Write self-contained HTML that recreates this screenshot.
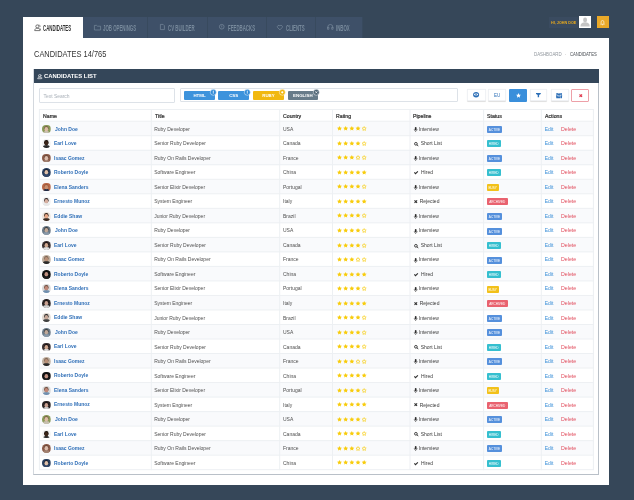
<!DOCTYPE html><html><head><meta charset="utf-8"><style>
*{margin:0;padding:0;box-sizing:border-box}
html,body{width:634px;height:500px;overflow:hidden}
body{background:#364759;font-family:"Liberation Sans",sans-serif;position:relative}
.t{position:absolute;white-space:nowrap;line-height:1}
.n{}
.b{position:absolute}
svg{position:absolute;overflow:visible}
#L{position:absolute;left:0;top:0;width:634px;height:500px;will-change:transform}</style></head><body><div id="L">
<div class="b" style="left:23.00px;top:16.80px;width:60.00px;height:20.80px;background:#fff"></div>
<div class="t" style="left:43.00px;top:23.94px;font-size:8.7px;color:#333;font-weight:bold;transform:scaleX(0.5);transform-origin:0 0;">CANDIDATES</div>
<div class="b" style="left:83.00px;top:16.50px;width:65.00px;height:21.10px;background:#3e5068;border-right:1px solid #384a5e"></div>
<div class="t" style="left:103.00px;top:23.94px;font-size:8.7px;color:#788a9c;font-weight:bold;transform:scaleX(0.5);transform-origin:0 0;">JOB OPENINGS</div>
<div class="b" style="left:148.00px;top:16.50px;width:59.50px;height:21.10px;background:#3e5068;border-right:1px solid #384a5e"></div>
<div class="t" style="left:168.10px;top:23.94px;font-size:8.7px;color:#788a9c;font-weight:bold;transform:scaleX(0.5);transform-origin:0 0;">CV BUILDER</div>
<div class="b" style="left:207.50px;top:16.50px;width:59.50px;height:21.10px;background:#3e5068;border-right:1px solid #384a5e"></div>
<div class="t" style="left:227.50px;top:23.94px;font-size:8.7px;color:#788a9c;font-weight:bold;transform:scaleX(0.5);transform-origin:0 0;">FEEDBACKS</div>
<div class="b" style="left:267.00px;top:16.50px;width:49.00px;height:21.10px;background:#3e5068;border-right:1px solid #384a5e"></div>
<div class="t" style="left:285.90px;top:23.94px;font-size:8.7px;color:#788a9c;font-weight:bold;transform:scaleX(0.5);transform-origin:0 0;">CLIENTS</div>
<div class="b" style="left:316.00px;top:16.50px;width:46.50px;height:21.10px;background:#3e5068;border-right:1px solid #384a5e"></div>
<div class="t" style="left:336.00px;top:23.94px;font-size:8.7px;color:#788a9c;font-weight:bold;transform:scaleX(0.5);transform-origin:0 0;">INBOX</div>
<svg style="left:33.6px;top:23.8px" width="7" height="7" viewBox="0 0 7 7"><circle cx="3.3" cy="2.4" r="1.5" stroke="#555" stroke-width="0.8" fill="none"/><path d="M0.7 6.6C0.7 5 1.8 4.3 3.3 4.3S5.9 5 5.9 6.6Z" stroke="#555" stroke-width="0.8" fill="none"/><path d="M4.6 0.8a1.4 1.4 0 0 1 1 2.4M5.6 4.2c0.6 0.3 1 1 1 2.2" stroke="#555" stroke-width="0.7" fill="none"/></svg>
<svg style="left:93.9px;top:24.6px" width="7" height="5.4" viewBox="0 0 7 5.4"><path d="M0.4 0.4h2.3l0.8 0.8h3.1v3.8H0.4z" stroke="#788a9c" stroke-width="0.7" fill="none"/></svg>
<svg style="left:159.8px;top:24.2px" width="4.8" height="6" viewBox="0 0 4.8 6"><path d="M0.4 0.4h2.7l1.3 1.3v3.9H0.4z" stroke="#788a9c" stroke-width="0.7" fill="none"/></svg>
<svg style="left:218.8px;top:24.3px" width="5.5" height="5.5" viewBox="0 0 5.5 5.5"><circle cx="2.75" cy="2.75" r="2.35" stroke="#788a9c" stroke-width="0.7" fill="none"/><path d="M2.75 1.4v1.9M2.75 3.8v0.5" stroke="#788a9c" stroke-width="0.7"/></svg>
<svg style="left:277.3px;top:24.5px" width="5.8" height="5.2" viewBox="0 0 5.8 5.2"><path d="M2.9 4.9L0.7 2.6A1.3 1.3 0 0 1 2.9 0.9A1.3 1.3 0 0 1 5.1 2.6z" stroke="#788a9c" stroke-width="0.7" fill="none"/></svg>
<svg style="left:326.9px;top:24.3px" width="6.6" height="5.6" viewBox="0 0 6.6 5.6"><path d="M0.8 4V3a2.5 2.5 0 0 1 5 0v1M0.5 3.3h1.4v2h-1.4zM4.7 3.3h1.4v2h-1.4z" stroke="#788a9c" stroke-width="0.7" fill="none"/></svg>
<div class="b" style="left:548.70px;top:17.00px;width:29.80px;height:10.80px;background:#3a4b60"></div>
<div class="t" style="left:551.00px;top:20.66px;font-size:4.3px;color:#e9aa1c;font-weight:bold;transform:scaleX(0.87);transform-origin:0 0;">HI, JOHN DOE</div>
<div class="b" style="left:579.10px;top:16.40px;width:12.20px;height:11.90px;background:#fff"></div>
<svg style="left:579.1px;top:16.4px" width="12.2" height="11.9" viewBox="0 0 12.2 11.9"><ellipse cx="6.1" cy="3.9" rx="2.0" ry="2.3" fill="#c4c4c4"/><path d="M1.4 10.6C1.4 7.6 3.4 6.3 6.1 6.3S10.8 7.6 10.8 10.6Z" fill="#c4c4c4"/></svg>
<div class="b" style="left:597.00px;top:16.40px;width:11.80px;height:11.90px;background:#eaa929"></div>
<svg style="left:600.4px;top:19.9px" width="5" height="5.3" viewBox="0 0 9 10"><path d="M4.5 1a2.6 2.6 0 0 1 2.6 2.6V6.5L8.2 8H0.8L1.9 6.5V3.6A2.6 2.6 0 0 1 4.5 1zM3.5 9h2" stroke="#fff" stroke-width="1.1" fill="none"/></svg>
<div class="b" style="left:23.00px;top:37.50px;width:586.20px;height:447.00px;background:#fff"></div>
<div class="t" style="left:33.80px;top:49.89px;font-size:8.4px;color:#333;font-weight:normal;transform:scaleX(0.89);transform-origin:0 0;">CANDIDATES 14/765</div>
<div class="t" style="left:533.90px;top:51.50px;font-size:5.2px;color:#8f959c;font-weight:normal;transform:scaleX(0.84);transform-origin:0 0;">DASHBOARD</div>
<div class="t n" style="left:564.80px;top:51.50px;font-size:5.2px;color:#999;font-weight:normal;">·</div>
<div class="t" style="left:569.90px;top:51.50px;font-size:5.2px;color:#454a50;font-weight:normal;transform:scaleX(0.81);transform-origin:0 0;">CANDIDATES</div>
<div class="b" style="left:33.00px;top:69.00px;width:566.20px;height:405.60px;background:#fff;border:1px solid #d3d8de;border-right-color:#b9c0c8;border-bottom-color:#b9c0c8;border-top:none"></div>
<div class="b" style="left:34.00px;top:69.00px;width:565.20px;height:13.80px;background:#344659"></div>
<svg style="left:37px;top:74px" width="5.4" height="5" viewBox="0 0 7 7"><circle cx="3.3" cy="2.4" r="1.5" stroke="#fff" stroke-width="0.9" fill="none"/><path d="M0.7 6.6C0.7 5 1.8 4.3 3.3 4.3S5.9 5 5.9 6.6Z" stroke="#fff" stroke-width="0.9" fill="none"/><path d="M4.6 0.8a1.4 1.4 0 0 1 1 2.4M5.6 4.2c0.6 0.3 1 1 1 2.2" stroke="#fff" stroke-width="0.8" fill="none"/></svg>
<div class="t" style="left:44.00px;top:73.91px;font-size:5.9px;color:#fff;font-weight:bold;">CANDIDATES LIST</div>
<div class="b" style="left:39.00px;top:88.20px;width:136.30px;height:14.70px;border:1px solid #dde2e8;border-radius:1px;background:#fff"></div>
<div class="t n" style="left:43.50px;top:95.11px;font-size:4.95px;color:#a9b0b8;font-weight:normal;">Text Search</div>
<div class="b" style="left:180.00px;top:87.60px;width:277.60px;height:14.70px;border:1px solid #dde2e8;border-radius:1px;background:#fff"></div>
<div class="b" style="left:184.10px;top:91.30px;width:30.80px;height:8.50px;background:#3d93dc;border-radius:1px"></div>
<div class="t" style="left:184.10px;top:93.80px;width:30.80px;text-align:center;font-size:4.4px;line-height:4.4px;color:#fff;font-weight:bold">HTML</div>
<svg style="left:210.10px;top:88.90px" width="6.6" height="6.6" viewBox="0 0 6.6 6.6"><circle cx="3.3" cy="3.3" r="3.0" fill="#2f8ad8" stroke="#fff" stroke-width="0.5"/><path d="M3.3 1.6v2.3M3.3 4.4v0.6" stroke="#fff" stroke-width="0.8"/></svg>
<div class="b" style="left:218.40px;top:91.30px;width:30.60px;height:8.50px;background:#3d93dc;border-radius:1px"></div>
<div class="t" style="left:218.40px;top:93.80px;width:30.60px;text-align:center;font-size:4.4px;line-height:4.4px;color:#fff;font-weight:bold">CSS</div>
<svg style="left:244.20px;top:88.90px" width="6.6" height="6.6" viewBox="0 0 6.6 6.6"><circle cx="3.3" cy="3.3" r="3.0" fill="#2f8ad8" stroke="#fff" stroke-width="0.5"/><path d="M3.3 1.6v2.3M3.3 4.4v0.6" stroke="#fff" stroke-width="0.8"/></svg>
<div class="b" style="left:253.00px;top:91.30px;width:31.00px;height:8.50px;background:#f1b810;border-radius:1px"></div>
<div class="t" style="left:253.00px;top:93.80px;width:31.00px;text-align:center;font-size:4.4px;line-height:4.4px;color:#fff;font-weight:bold">RUBY</div>
<svg style="left:279.20px;top:88.90px" width="6.6" height="6.6" viewBox="0 0 6.6 6.6"><circle cx="3.3" cy="3.3" r="3.0" fill="#f1b810" stroke="#fff" stroke-width="0.5"/><circle cx="3.3" cy="3.3" r="1.1" fill="#fff"/></svg>
<div class="b" style="left:287.60px;top:91.30px;width:30.40px;height:8.50px;background:#677b89;border-radius:1px"></div>
<div class="t" style="left:287.60px;top:93.80px;width:30.40px;text-align:center;font-size:4.4px;line-height:4.4px;color:#fff;font-weight:bold">ENGLISH</div>
<svg style="left:313.20px;top:88.90px" width="6.6" height="6.6" viewBox="0 0 6.6 6.6"><circle cx="3.3" cy="3.3" r="3.0" fill="#4f6575" stroke="#fff" stroke-width="0.5"/><path d="M2.3 2.3l2 2M4.3 2.3l-2 2" stroke="#fff" stroke-width="0.7"/></svg>
<div class="b" style="left:466.80px;top:88.50px;width:18.80px;height:12.80px;background:#fff;border:1px solid #f0f2f5;border-radius:1px;box-shadow:0 0.8px 0.8px rgba(0,0,0,0.13)"></div>
<div class="b" style="left:488.30px;top:88.50px;width:17.90px;height:12.80px;background:#fff;border:1px solid #f0f2f5;border-radius:1px;box-shadow:0 0.8px 0.8px rgba(0,0,0,0.13)"></div>
<div class="b" style="left:509.00px;top:88.50px;width:17.90px;height:13.00px;background:#3a8fdb;border-radius:1px"></div>
<div class="b" style="left:529.70px;top:88.50px;width:17.60px;height:12.80px;background:#fff;border:1px solid #f0f2f5;border-radius:1px;box-shadow:0 0.8px 0.8px rgba(0,0,0,0.13)"></div>
<div class="b" style="left:550.70px;top:88.50px;width:18.20px;height:12.80px;background:#fff;border:1px solid #f0f2f5;border-radius:1px;box-shadow:0 0.8px 0.8px rgba(0,0,0,0.13)"></div>
<div class="b" style="left:571.20px;top:88.50px;width:17.60px;height:13.00px;background:#fff;border:1px solid #eda0a8;border-radius:1px"></div>
<svg style="left:473px;top:92.3px" width="6.2" height="5.6" viewBox="0 0 6.2 5.6"><ellipse cx="3.1" cy="2.8" rx="3.0" ry="2.75" fill="#2d6fb7"/><ellipse cx="3.1" cy="2.5" rx="2.1" ry="1.0" fill="#fff"/><circle cx="3.1" cy="2.4" r="0.75" fill="#2d6fb7"/></svg>
<div class="t n" style="left:493.90px;top:93.17px;font-size:5.0px;color:#2d6fb7;font-weight:normal;transform:scaleX(0.9);transform-origin:0 0;">EU</div>
<svg style="left:515.6px;top:92.9px" width="5" height="4.8" viewBox="0 0 10 9.6"><path d="M5 0.2l1.5 3.1 3.4 0.4-2.5 2.3 0.7 3.4L5 7.7 1.9 9.4l0.7-3.4L0.1 3.7l3.4-0.4z" fill="#fff"/></svg>
<svg style="left:536.2px;top:93px" width="4.8" height="4.2" viewBox="0 0 4.8 4.2"><path d="M0 0h4.8v0.9L3.1 2.1v2.1H1.7V2.1L0 0.9z" fill="#2d6fb7"/></svg>
<svg style="left:556.4px;top:92.6px" width="6.2" height="5.2" viewBox="0 0 6.2 5.2"><circle cx="1.1" cy="1.1" r="1.0" fill="#2d6fb7"/><circle cx="5.1" cy="1.1" r="1.0" fill="#2d6fb7"/><circle cx="3.1" cy="1.6" r="1.25" fill="#2d6fb7"/><path d="M0 2.2h1.6l0.3 3H0.3zM6.2 2.2H4.6l-0.3 3h1.6zM1.5 2.9h3.2v2.3H1.5z" fill="#2d6fb7"/><path d="M1.6 3.4h3" stroke="#fff" stroke-width="0.35"/></svg>
<svg style="left:578.6px;top:93.8px" width="3.6" height="3.4" viewBox="0 0 3.6 3.4"><path d="M0.5 0.5l2.6 2.4M3.1 0.5l-2.6 2.4" stroke="#e0354b" stroke-width="1.2"/></svg>
<svg style="left:0;top:0" width="634" height="500" viewBox="0 0 634 500"><rect x="39.4" y="121.20" width="554.00" height="14.52" fill="#f9fafc"/><rect x="39.4" y="150.24" width="554.00" height="14.52" fill="#f9fafc"/><rect x="39.4" y="179.28" width="554.00" height="14.52" fill="#f9fafc"/><rect x="39.4" y="208.32" width="554.00" height="14.52" fill="#f9fafc"/><rect x="39.4" y="237.36" width="554.00" height="14.52" fill="#f9fafc"/><rect x="39.4" y="266.40" width="554.00" height="14.52" fill="#f9fafc"/><rect x="39.4" y="295.44" width="554.00" height="14.52" fill="#f9fafc"/><rect x="39.4" y="324.48" width="554.00" height="14.52" fill="#f9fafc"/><rect x="39.4" y="353.52" width="554.00" height="14.52" fill="#f9fafc"/><rect x="39.4" y="382.56" width="554.00" height="14.52" fill="#f9fafc"/><rect x="39.4" y="411.60" width="554.00" height="14.52" fill="#f9fafc"/><rect x="39.4" y="440.64" width="554.00" height="14.52" fill="#f9fafc"/><rect x="39.4" y="109.00" width="554.00" height="1" fill="#edf0f3"/><rect x="39.4" y="120.70" width="554.00" height="1" fill="#edf0f3"/><rect x="39.4" y="135.22" width="554.00" height="1" fill="#edf0f3"/><rect x="39.4" y="149.74" width="554.00" height="1" fill="#edf0f3"/><rect x="39.4" y="164.26" width="554.00" height="1" fill="#edf0f3"/><rect x="39.4" y="178.78" width="554.00" height="1" fill="#edf0f3"/><rect x="39.4" y="193.30" width="554.00" height="1" fill="#edf0f3"/><rect x="39.4" y="207.82" width="554.00" height="1" fill="#edf0f3"/><rect x="39.4" y="222.34" width="554.00" height="1" fill="#edf0f3"/><rect x="39.4" y="236.86" width="554.00" height="1" fill="#edf0f3"/><rect x="39.4" y="251.38" width="554.00" height="1" fill="#edf0f3"/><rect x="39.4" y="265.90" width="554.00" height="1" fill="#edf0f3"/><rect x="39.4" y="280.42" width="554.00" height="1" fill="#edf0f3"/><rect x="39.4" y="294.94" width="554.00" height="1" fill="#edf0f3"/><rect x="39.4" y="309.46" width="554.00" height="1" fill="#edf0f3"/><rect x="39.4" y="323.98" width="554.00" height="1" fill="#edf0f3"/><rect x="39.4" y="338.50" width="554.00" height="1" fill="#edf0f3"/><rect x="39.4" y="353.02" width="554.00" height="1" fill="#edf0f3"/><rect x="39.4" y="367.54" width="554.00" height="1" fill="#edf0f3"/><rect x="39.4" y="382.06" width="554.00" height="1" fill="#edf0f3"/><rect x="39.4" y="396.58" width="554.00" height="1" fill="#edf0f3"/><rect x="39.4" y="411.10" width="554.00" height="1" fill="#edf0f3"/><rect x="39.4" y="425.62" width="554.00" height="1" fill="#edf0f3"/><rect x="39.4" y="440.14" width="554.00" height="1" fill="#edf0f3"/><rect x="39.4" y="454.66" width="554.00" height="1" fill="#edf0f3"/><rect x="39.4" y="469.18" width="554.00" height="1" fill="#edf0f3"/><rect x="38.90" y="109.00" width="1" height="361.18" fill="#edf0f3"/><rect x="150.80" y="109.00" width="1" height="361.18" fill="#edf0f3"/><rect x="279.20" y="109.00" width="1" height="361.18" fill="#edf0f3"/><rect x="332.00" y="109.00" width="1" height="361.18" fill="#edf0f3"/><rect x="409.50" y="109.00" width="1" height="361.18" fill="#edf0f3"/><rect x="483.10" y="109.00" width="1" height="361.18" fill="#edf0f3"/><rect x="540.80" y="109.00" width="1" height="361.18" fill="#edf0f3"/><rect x="592.90" y="109.00" width="1" height="361.18" fill="#edf0f3"/></svg>
<div class="t n" style="left:42.70px;top:113.57px;font-size:5.0px;color:#333;font-weight:normal;transform:scaleX(1.04);transform-origin:0 0;-webkit-text-stroke:0.22px #333;">Name</div>
<div class="t n" style="left:154.60px;top:113.57px;font-size:5.0px;color:#333;font-weight:normal;transform:scaleX(1.04);transform-origin:0 0;-webkit-text-stroke:0.22px #333;">Title</div>
<div class="t n" style="left:283.00px;top:113.57px;font-size:5.0px;color:#333;font-weight:normal;transform:scaleX(1.04);transform-origin:0 0;-webkit-text-stroke:0.22px #333;">Country</div>
<div class="t n" style="left:335.80px;top:113.57px;font-size:5.0px;color:#333;font-weight:normal;transform:scaleX(1.04);transform-origin:0 0;-webkit-text-stroke:0.22px #333;">Rating</div>
<div class="t n" style="left:413.30px;top:113.57px;font-size:5.0px;color:#333;font-weight:normal;transform:scaleX(1.04);transform-origin:0 0;-webkit-text-stroke:0.22px #333;">Pipeline</div>
<div class="t n" style="left:486.90px;top:113.57px;font-size:5.0px;color:#333;font-weight:normal;transform:scaleX(1.04);transform-origin:0 0;-webkit-text-stroke:0.22px #333;">Status</div>
<div class="t n" style="left:544.60px;top:113.57px;font-size:5.0px;color:#333;font-weight:normal;transform:scaleX(1.04);transform-origin:0 0;-webkit-text-stroke:0.22px #333;">Actions</div>
<div class="b" style="left:42.3px;top:124.71px;width:8.7px;height:8.7px;border-radius:50%;overflow:hidden"><svg style="left:0;top:0" width="8.7" height="8.7" viewBox="0 0 10 10"><rect width="10" height="10" fill="#8a9a58"/><path d="M0.8 10.5C0.8 7.6 2.8 6.9 5 6.9S9.2 7.6 9.2 10.5Z" fill="#c8c0b0"/><ellipse cx="5" cy="3.9" rx="2.6" ry="2.8" fill="#7a6048"/><ellipse cx="5" cy="4.8" rx="2.1" ry="2.5" fill="#dcbca4"/></svg></div>
<div class="t" style="left:54.80px;top:126.60px;font-size:5.2px;color:#3170b8;font-weight:bold;transform:scaleX(0.965);transform-origin:0 0;">John Doe</div>
<div class="t n" style="left:154.20px;top:126.77px;font-size:5.0px;color:#505050;font-weight:normal;">Ruby Developer</div>
<div class="t n" style="left:283.00px;top:126.77px;font-size:5.0px;color:#505050;font-weight:normal;">USA</div>
<svg style="left:336.5px;top:126.36px" width="30" height="5" viewBox="0 0 30 5"><path transform="translate(0.00,0)" d="M2.5 0l0.74 1.55 1.7 0.2-1.25 1.17 0.33 1.7-1.52-0.84-1.52 0.84 0.33-1.7L0.06 1.75l1.7-0.2z" fill="#f8cc0c"/><path transform="translate(6.17,0)" d="M2.5 0l0.74 1.55 1.7 0.2-1.25 1.17 0.33 1.7-1.52-0.84-1.52 0.84 0.33-1.7L0.06 1.75l1.7-0.2z" fill="#f8cc0c"/><path transform="translate(12.34,0)" d="M2.5 0l0.74 1.55 1.7 0.2-1.25 1.17 0.33 1.7-1.52-0.84-1.52 0.84 0.33-1.7L0.06 1.75l1.7-0.2z" fill="#f8cc0c"/><path transform="translate(18.51,0)" d="M2.5 0l0.74 1.55 1.7 0.2-1.25 1.17 0.33 1.7-1.52-0.84-1.52 0.84 0.33-1.7L0.06 1.75l1.7-0.2z" fill="#f8cc0c"/><path transform="translate(24.68,0)" d="M2.5 0.55l0.6 1.3 1.42 0.17-1.05 0.98 0.28 1.42-1.25-0.7-1.25 0.7 0.28-1.42-1.05-0.98 1.42-0.17z" fill="none" stroke="#f8cc0c" stroke-width="0.65"/></svg>
<svg style="left:414.1px;top:126.96px" width="3.4" height="4.8" viewBox="0 0 3.4 4.8"><rect x="0.85" y="0" width="1.7" height="3.0" rx="0.85" fill="#2e2e2e"/><path d="M0.35 2.0v0.6a1.35 1.35 0 0 0 2.7 0V2.0" stroke="#2e2e2e" stroke-width="0.55" fill="none"/><rect x="1.45" y="3.9" width="0.5" height="0.9" fill="#2e2e2e"/></svg>
<div class="t n" style="left:418.80px;top:126.77px;font-size:5.0px;color:#3a3a3a;font-weight:normal;">Interview</div>
<div class="t" style="left:486.7px;top:125.86px;width:15.5px;height:7px;border-radius:0.9px;background:#5590dc;color:#fff;font-size:3.1px;line-height:8.8px;text-align:center">ACTIVE</div>
<div class="t n" style="left:544.70px;top:126.77px;font-size:5.0px;color:#3a8fd8;font-weight:normal;">Edit</div>
<div class="t n" style="left:560.90px;top:126.77px;font-size:5.0px;color:#e14c5c;font-weight:normal;transform:scaleX(1.05);transform-origin:0 0;">Delete</div>
<div class="b" style="left:42.3px;top:139.23px;width:8.7px;height:8.7px;border-radius:50%;overflow:hidden"><svg style="left:0;top:0" width="8.7" height="8.7" viewBox="0 0 10 10"><rect width="10" height="10" fill="#f2f2f2"/><path d="M0.8 10.5C0.8 7.6 2.8 6.9 5 6.9S9.2 7.6 9.2 10.5Z" fill="#2a2a2a"/><ellipse cx="5" cy="3.9" rx="2.6" ry="2.8" fill="#140c06"/><ellipse cx="5" cy="4.8" rx="2.1" ry="2.5" fill="#3a2418"/></svg></div>
<div class="t" style="left:54.00px;top:141.12px;font-size:5.2px;color:#3170b8;font-weight:bold;transform:scaleX(0.965);transform-origin:0 0;">Earl Love</div>
<div class="t n" style="left:154.20px;top:141.29px;font-size:5.0px;color:#505050;font-weight:normal;">Senior Ruby Developer</div>
<div class="t n" style="left:283.00px;top:141.29px;font-size:5.0px;color:#505050;font-weight:normal;">Canada</div>
<svg style="left:336.5px;top:140.88px" width="30" height="5" viewBox="0 0 30 5"><path transform="translate(0.00,0)" d="M2.5 0l0.74 1.55 1.7 0.2-1.25 1.17 0.33 1.7-1.52-0.84-1.52 0.84 0.33-1.7L0.06 1.75l1.7-0.2z" fill="#f8cc0c"/><path transform="translate(6.17,0)" d="M2.5 0l0.74 1.55 1.7 0.2-1.25 1.17 0.33 1.7-1.52-0.84-1.52 0.84 0.33-1.7L0.06 1.75l1.7-0.2z" fill="#f8cc0c"/><path transform="translate(12.34,0)" d="M2.5 0l0.74 1.55 1.7 0.2-1.25 1.17 0.33 1.7-1.52-0.84-1.52 0.84 0.33-1.7L0.06 1.75l1.7-0.2z" fill="#f8cc0c"/><path transform="translate(18.51,0)" d="M2.5 0l0.74 1.55 1.7 0.2-1.25 1.17 0.33 1.7-1.52-0.84-1.52 0.84 0.33-1.7L0.06 1.75l1.7-0.2z" fill="#f8cc0c"/><path transform="translate(24.68,0)" d="M2.5 0.55l0.6 1.3 1.42 0.17-1.05 0.98 0.28 1.42-1.25-0.7-1.25 0.7 0.28-1.42-1.05-0.98 1.42-0.17z" fill="none" stroke="#f8cc0c" stroke-width="0.65"/></svg>
<svg style="left:413.5px;top:141.93px" width="4.7" height="4.1" viewBox="0 0 4.7 4.1"><circle cx="1.9" cy="1.8" r="1.35" stroke="#2e2e2e" stroke-width="0.9" fill="none"/><path d="M2.9 2.8l1.4 1.1" stroke="#2e2e2e" stroke-width="1.0"/></svg>
<div class="t n" style="left:420.70px;top:141.29px;font-size:5.0px;color:#3a3a3a;font-weight:normal;">Short List</div>
<div class="t" style="left:486.7px;top:140.38px;width:14px;height:7px;border-radius:0.9px;background:#35bfcf;color:#fff;font-size:3.1px;line-height:8.8px;text-align:center">HIRED</div>
<div class="t n" style="left:544.70px;top:141.29px;font-size:5.0px;color:#3a8fd8;font-weight:normal;">Edit</div>
<div class="t n" style="left:560.90px;top:141.29px;font-size:5.0px;color:#e14c5c;font-weight:normal;transform:scaleX(1.05);transform-origin:0 0;">Delete</div>
<div class="b" style="left:42.3px;top:153.75px;width:8.7px;height:8.7px;border-radius:50%;overflow:hidden"><svg style="left:0;top:0" width="8.7" height="8.7" viewBox="0 0 10 10"><rect width="10" height="10" fill="#8a5a48"/><path d="M0.8 10.5C0.8 7.6 2.8 6.9 5 6.9S9.2 7.6 9.2 10.5Z" fill="#a08070"/><ellipse cx="5" cy="3.9" rx="2.6" ry="2.8" fill="#6a4838"/><ellipse cx="5" cy="4.8" rx="2.1" ry="2.5" fill="#dcbcac"/></svg></div>
<div class="t" style="left:54.00px;top:155.64px;font-size:5.2px;color:#3170b8;font-weight:bold;transform:scaleX(0.965);transform-origin:0 0;">Isaac Gomez</div>
<div class="t n" style="left:154.20px;top:155.81px;font-size:5.0px;color:#505050;font-weight:normal;">Ruby On Rails Developer</div>
<div class="t n" style="left:283.00px;top:155.81px;font-size:5.0px;color:#505050;font-weight:normal;">France</div>
<svg style="left:336.5px;top:155.40px" width="30" height="5" viewBox="0 0 30 5"><path transform="translate(0.00,0)" d="M2.5 0l0.74 1.55 1.7 0.2-1.25 1.17 0.33 1.7-1.52-0.84-1.52 0.84 0.33-1.7L0.06 1.75l1.7-0.2z" fill="#f8cc0c"/><path transform="translate(6.17,0)" d="M2.5 0l0.74 1.55 1.7 0.2-1.25 1.17 0.33 1.7-1.52-0.84-1.52 0.84 0.33-1.7L0.06 1.75l1.7-0.2z" fill="#f8cc0c"/><path transform="translate(12.34,0)" d="M2.5 0l0.74 1.55 1.7 0.2-1.25 1.17 0.33 1.7-1.52-0.84-1.52 0.84 0.33-1.7L0.06 1.75l1.7-0.2z" fill="#f8cc0c"/><path transform="translate(18.51,0)" d="M2.5 0.55l0.6 1.3 1.42 0.17-1.05 0.98 0.28 1.42-1.25-0.7-1.25 0.7 0.28-1.42-1.05-0.98 1.42-0.17z" fill="none" stroke="#f8cc0c" stroke-width="0.65"/><path transform="translate(24.68,0)" d="M2.5 0.55l0.6 1.3 1.42 0.17-1.05 0.98 0.28 1.42-1.25-0.7-1.25 0.7 0.28-1.42-1.05-0.98 1.42-0.17z" fill="none" stroke="#f8cc0c" stroke-width="0.65"/></svg>
<svg style="left:414.1px;top:156.00px" width="3.4" height="4.8" viewBox="0 0 3.4 4.8"><rect x="0.85" y="0" width="1.7" height="3.0" rx="0.85" fill="#2e2e2e"/><path d="M0.35 2.0v0.6a1.35 1.35 0 0 0 2.7 0V2.0" stroke="#2e2e2e" stroke-width="0.55" fill="none"/><rect x="1.45" y="3.9" width="0.5" height="0.9" fill="#2e2e2e"/></svg>
<div class="t n" style="left:418.80px;top:155.81px;font-size:5.0px;color:#3a3a3a;font-weight:normal;">Interview</div>
<div class="t" style="left:486.7px;top:154.90px;width:15.5px;height:7px;border-radius:0.9px;background:#5590dc;color:#fff;font-size:3.1px;line-height:8.8px;text-align:center">ACTIVE</div>
<div class="t n" style="left:544.70px;top:155.81px;font-size:5.0px;color:#3a8fd8;font-weight:normal;">Edit</div>
<div class="t n" style="left:560.90px;top:155.81px;font-size:5.0px;color:#e14c5c;font-weight:normal;transform:scaleX(1.05);transform-origin:0 0;">Delete</div>
<div class="b" style="left:42.3px;top:168.27px;width:8.7px;height:8.7px;border-radius:50%;overflow:hidden"><svg style="left:0;top:0" width="8.7" height="8.7" viewBox="0 0 10 10"><rect width="10" height="10" fill="#2a4060"/><path d="M0.8 10.5C0.8 7.6 2.8 6.9 5 6.9S9.2 7.6 9.2 10.5Z" fill="#34486a"/><ellipse cx="5" cy="3.9" rx="2.6" ry="2.8" fill="#1a2030"/><ellipse cx="5" cy="4.8" rx="2.1" ry="2.5" fill="#e0c0a8"/></svg></div>
<div class="t" style="left:54.00px;top:170.16px;font-size:5.2px;color:#3170b8;font-weight:bold;transform:scaleX(0.965);transform-origin:0 0;">Roberto Doyle</div>
<div class="t n" style="left:154.20px;top:170.33px;font-size:5.0px;color:#505050;font-weight:normal;">Software Engineer</div>
<div class="t n" style="left:283.00px;top:170.33px;font-size:5.0px;color:#505050;font-weight:normal;">China</div>
<svg style="left:336.5px;top:169.92px" width="30" height="5" viewBox="0 0 30 5"><path transform="translate(0.00,0)" d="M2.5 0l0.74 1.55 1.7 0.2-1.25 1.17 0.33 1.7-1.52-0.84-1.52 0.84 0.33-1.7L0.06 1.75l1.7-0.2z" fill="#f8cc0c"/><path transform="translate(6.17,0)" d="M2.5 0l0.74 1.55 1.7 0.2-1.25 1.17 0.33 1.7-1.52-0.84-1.52 0.84 0.33-1.7L0.06 1.75l1.7-0.2z" fill="#f8cc0c"/><path transform="translate(12.34,0)" d="M2.5 0l0.74 1.55 1.7 0.2-1.25 1.17 0.33 1.7-1.52-0.84-1.52 0.84 0.33-1.7L0.06 1.75l1.7-0.2z" fill="#f8cc0c"/><path transform="translate(18.51,0)" d="M2.5 0l0.74 1.55 1.7 0.2-1.25 1.17 0.33 1.7-1.52-0.84-1.52 0.84 0.33-1.7L0.06 1.75l1.7-0.2z" fill="#f8cc0c"/><path transform="translate(24.68,0)" d="M2.5 0l0.74 1.55 1.7 0.2-1.25 1.17 0.33 1.7-1.52-0.84-1.52 0.84 0.33-1.7L0.06 1.75l1.7-0.2z" fill="#f8cc0c"/></svg>
<svg style="left:413.9px;top:171.42px" width="4.2" height="3.2" viewBox="0 0 4.2 3.2"><path d="M0.35 1.5L1.5 2.7L3.9 0.35" stroke="#2e2e2e" stroke-width="1.1" fill="none"/></svg>
<div class="t n" style="left:421.00px;top:170.33px;font-size:5.0px;color:#3a3a3a;font-weight:normal;">Hired</div>
<div class="t" style="left:486.7px;top:169.42px;width:14px;height:7px;border-radius:0.9px;background:#35bfcf;color:#fff;font-size:3.1px;line-height:8.8px;text-align:center">HIRED</div>
<div class="t n" style="left:544.70px;top:170.33px;font-size:5.0px;color:#3a8fd8;font-weight:normal;">Edit</div>
<div class="t n" style="left:560.90px;top:170.33px;font-size:5.0px;color:#e14c5c;font-weight:normal;transform:scaleX(1.05);transform-origin:0 0;">Delete</div>
<div class="b" style="left:42.3px;top:182.79px;width:8.7px;height:8.7px;border-radius:50%;overflow:hidden"><svg style="left:0;top:0" width="8.7" height="8.7" viewBox="0 0 10 10"><rect width="10" height="10" fill="#b86848"/><path d="M0.8 10.5C0.8 7.6 2.8 6.9 5 6.9S9.2 7.6 9.2 10.5Z" fill="#1a2a48"/><ellipse cx="5" cy="3.9" rx="2.6" ry="2.8" fill="#a05838"/><ellipse cx="5" cy="4.8" rx="2.1" ry="2.5" fill="#c89070"/></svg></div>
<div class="t" style="left:54.00px;top:184.68px;font-size:5.2px;color:#3170b8;font-weight:bold;transform:scaleX(0.965);transform-origin:0 0;">Elena Sanders</div>
<div class="t n" style="left:154.20px;top:184.85px;font-size:5.0px;color:#505050;font-weight:normal;">Senior Elixir Developer</div>
<div class="t n" style="left:283.00px;top:184.85px;font-size:5.0px;color:#505050;font-weight:normal;">Portugal</div>
<svg style="left:336.5px;top:184.44px" width="30" height="5" viewBox="0 0 30 5"><path transform="translate(0.00,0)" d="M2.5 0l0.74 1.55 1.7 0.2-1.25 1.17 0.33 1.7-1.52-0.84-1.52 0.84 0.33-1.7L0.06 1.75l1.7-0.2z" fill="#f8cc0c"/><path transform="translate(6.17,0)" d="M2.5 0l0.74 1.55 1.7 0.2-1.25 1.17 0.33 1.7-1.52-0.84-1.52 0.84 0.33-1.7L0.06 1.75l1.7-0.2z" fill="#f8cc0c"/><path transform="translate(12.34,0)" d="M2.5 0l0.74 1.55 1.7 0.2-1.25 1.17 0.33 1.7-1.52-0.84-1.52 0.84 0.33-1.7L0.06 1.75l1.7-0.2z" fill="#f8cc0c"/><path transform="translate(18.51,0)" d="M2.5 0l0.74 1.55 1.7 0.2-1.25 1.17 0.33 1.7-1.52-0.84-1.52 0.84 0.33-1.7L0.06 1.75l1.7-0.2z" fill="#f8cc0c"/><path transform="translate(24.68,0)" d="M2.5 0.55l0.6 1.3 1.42 0.17-1.05 0.98 0.28 1.42-1.25-0.7-1.25 0.7 0.28-1.42-1.05-0.98 1.42-0.17z" fill="none" stroke="#f8cc0c" stroke-width="0.65"/></svg>
<svg style="left:414.1px;top:185.04px" width="3.4" height="4.8" viewBox="0 0 3.4 4.8"><rect x="0.85" y="0" width="1.7" height="3.0" rx="0.85" fill="#2e2e2e"/><path d="M0.35 2.0v0.6a1.35 1.35 0 0 0 2.7 0V2.0" stroke="#2e2e2e" stroke-width="0.55" fill="none"/><rect x="1.45" y="3.9" width="0.5" height="0.9" fill="#2e2e2e"/></svg>
<div class="t n" style="left:418.80px;top:184.85px;font-size:5.0px;color:#3a3a3a;font-weight:normal;">Interview</div>
<div class="t" style="left:486.7px;top:183.94px;width:12px;height:7px;border-radius:0.9px;background:#f2c11a;color:#fff;font-size:3.1px;line-height:8.8px;text-align:center">BUSY</div>
<div class="t n" style="left:544.70px;top:184.85px;font-size:5.0px;color:#3a8fd8;font-weight:normal;">Edit</div>
<div class="t n" style="left:560.90px;top:184.85px;font-size:5.0px;color:#e14c5c;font-weight:normal;transform:scaleX(1.05);transform-origin:0 0;">Delete</div>
<div class="b" style="left:42.3px;top:197.31px;width:8.7px;height:8.7px;border-radius:50%;overflow:hidden"><svg style="left:0;top:0" width="8.7" height="8.7" viewBox="0 0 10 10"><rect width="10" height="10" fill="#f2f2f2"/><path d="M0.8 10.5C0.8 7.6 2.8 6.9 5 6.9S9.2 7.6 9.2 10.5Z" fill="#e8e8e8"/><ellipse cx="5" cy="3.9" rx="2.6" ry="2.8" fill="#2a2020"/><ellipse cx="5" cy="4.8" rx="2.1" ry="2.5" fill="#d8b0a0"/></svg></div>
<div class="t" style="left:54.00px;top:199.20px;font-size:5.2px;color:#3170b8;font-weight:bold;transform:scaleX(0.965);transform-origin:0 0;">Ernesto Munoz</div>
<div class="t n" style="left:154.20px;top:199.37px;font-size:5.0px;color:#505050;font-weight:normal;">System Engineer</div>
<div class="t n" style="left:283.00px;top:199.37px;font-size:5.0px;color:#505050;font-weight:normal;">Italy</div>
<svg style="left:336.5px;top:198.96px" width="30" height="5" viewBox="0 0 30 5"><path transform="translate(0.00,0)" d="M2.5 0l0.74 1.55 1.7 0.2-1.25 1.17 0.33 1.7-1.52-0.84-1.52 0.84 0.33-1.7L0.06 1.75l1.7-0.2z" fill="#f8cc0c"/><path transform="translate(6.17,0)" d="M2.5 0l0.74 1.55 1.7 0.2-1.25 1.17 0.33 1.7-1.52-0.84-1.52 0.84 0.33-1.7L0.06 1.75l1.7-0.2z" fill="#f8cc0c"/><path transform="translate(12.34,0)" d="M2.5 0l0.74 1.55 1.7 0.2-1.25 1.17 0.33 1.7-1.52-0.84-1.52 0.84 0.33-1.7L0.06 1.75l1.7-0.2z" fill="#f8cc0c"/><path transform="translate(18.51,0)" d="M2.5 0l0.74 1.55 1.7 0.2-1.25 1.17 0.33 1.7-1.52-0.84-1.52 0.84 0.33-1.7L0.06 1.75l1.7-0.2z" fill="#f8cc0c"/><path transform="translate(24.68,0)" d="M2.5 0l0.74 1.55 1.7 0.2-1.25 1.17 0.33 1.7-1.52-0.84-1.52 0.84 0.33-1.7L0.06 1.75l1.7-0.2z" fill="#f8cc0c"/></svg>
<svg style="left:414.1px;top:200.10px" width="3.6" height="3.2" viewBox="0 0 3.6 3.2"><path d="M0.5 0.4l2.6 2.4M3.1 0.4l-2.6 2.4" stroke="#2e2e2e" stroke-width="1.1"/></svg>
<div class="t n" style="left:419.70px;top:199.37px;font-size:5.0px;color:#3a3a3a;font-weight:normal;">Rejected</div>
<div class="t" style="left:486.7px;top:198.46px;width:21px;height:7px;border-radius:0.9px;background:#e9626f;color:#fff;font-size:3.1px;line-height:8.8px;text-align:center">ARCHIVED</div>
<div class="t n" style="left:544.70px;top:199.37px;font-size:5.0px;color:#3a8fd8;font-weight:normal;">Edit</div>
<div class="t n" style="left:560.90px;top:199.37px;font-size:5.0px;color:#e14c5c;font-weight:normal;transform:scaleX(1.05);transform-origin:0 0;">Delete</div>
<div class="b" style="left:42.3px;top:211.83px;width:8.7px;height:8.7px;border-radius:50%;overflow:hidden"><svg style="left:0;top:0" width="8.7" height="8.7" viewBox="0 0 10 10"><rect width="10" height="10" fill="#ece4dc"/><path d="M0.8 10.5C0.8 7.6 2.8 6.9 5 6.9S9.2 7.6 9.2 10.5Z" fill="#3a2a20"/><ellipse cx="5" cy="3.9" rx="2.6" ry="2.8" fill="#2a1a10"/><ellipse cx="5" cy="4.8" rx="2.1" ry="2.5" fill="#e8a888"/></svg></div>
<div class="t" style="left:54.00px;top:213.72px;font-size:5.2px;color:#3170b8;font-weight:bold;transform:scaleX(0.965);transform-origin:0 0;">Eddie Shaw</div>
<div class="t n" style="left:154.20px;top:213.89px;font-size:5.0px;color:#505050;font-weight:normal;">Junior Ruby Developer</div>
<div class="t n" style="left:283.00px;top:213.89px;font-size:5.0px;color:#505050;font-weight:normal;">Brazil</div>
<svg style="left:336.5px;top:213.48px" width="30" height="5" viewBox="0 0 30 5"><path transform="translate(0.00,0)" d="M2.5 0l0.74 1.55 1.7 0.2-1.25 1.17 0.33 1.7-1.52-0.84-1.52 0.84 0.33-1.7L0.06 1.75l1.7-0.2z" fill="#f8cc0c"/><path transform="translate(6.17,0)" d="M2.5 0l0.74 1.55 1.7 0.2-1.25 1.17 0.33 1.7-1.52-0.84-1.52 0.84 0.33-1.7L0.06 1.75l1.7-0.2z" fill="#f8cc0c"/><path transform="translate(12.34,0)" d="M2.5 0l0.74 1.55 1.7 0.2-1.25 1.17 0.33 1.7-1.52-0.84-1.52 0.84 0.33-1.7L0.06 1.75l1.7-0.2z" fill="#f8cc0c"/><path transform="translate(18.51,0)" d="M2.5 0l0.74 1.55 1.7 0.2-1.25 1.17 0.33 1.7-1.52-0.84-1.52 0.84 0.33-1.7L0.06 1.75l1.7-0.2z" fill="#f8cc0c"/><path transform="translate(24.68,0)" d="M2.5 0.55l0.6 1.3 1.42 0.17-1.05 0.98 0.28 1.42-1.25-0.7-1.25 0.7 0.28-1.42-1.05-0.98 1.42-0.17z" fill="none" stroke="#f8cc0c" stroke-width="0.65"/></svg>
<svg style="left:414.1px;top:214.08px" width="3.4" height="4.8" viewBox="0 0 3.4 4.8"><rect x="0.85" y="0" width="1.7" height="3.0" rx="0.85" fill="#2e2e2e"/><path d="M0.35 2.0v0.6a1.35 1.35 0 0 0 2.7 0V2.0" stroke="#2e2e2e" stroke-width="0.55" fill="none"/><rect x="1.45" y="3.9" width="0.5" height="0.9" fill="#2e2e2e"/></svg>
<div class="t n" style="left:418.80px;top:213.89px;font-size:5.0px;color:#3a3a3a;font-weight:normal;">Interview</div>
<div class="t" style="left:486.7px;top:212.98px;width:15.5px;height:7px;border-radius:0.9px;background:#5590dc;color:#fff;font-size:3.1px;line-height:8.8px;text-align:center">ACTIVE</div>
<div class="t n" style="left:544.70px;top:213.89px;font-size:5.0px;color:#3a8fd8;font-weight:normal;">Edit</div>
<div class="t n" style="left:560.90px;top:213.89px;font-size:5.0px;color:#e14c5c;font-weight:normal;transform:scaleX(1.05);transform-origin:0 0;">Delete</div>
<div class="b" style="left:42.3px;top:226.35px;width:8.7px;height:8.7px;border-radius:50%;overflow:hidden"><svg style="left:0;top:0" width="8.7" height="8.7" viewBox="0 0 10 10"><rect width="10" height="10" fill="#6a7a88"/><path d="M0.8 10.5C0.8 7.6 2.8 6.9 5 6.9S9.2 7.6 9.2 10.5Z" fill="#8898a8"/><ellipse cx="5" cy="3.9" rx="2.6" ry="2.8" fill="#3a3a3a"/><ellipse cx="5" cy="4.8" rx="2.1" ry="2.5" fill="#c0a898"/></svg></div>
<div class="t" style="left:54.80px;top:228.24px;font-size:5.2px;color:#3170b8;font-weight:bold;transform:scaleX(0.965);transform-origin:0 0;">John Doe</div>
<div class="t n" style="left:154.20px;top:228.41px;font-size:5.0px;color:#505050;font-weight:normal;">Ruby Developer</div>
<div class="t n" style="left:283.00px;top:228.41px;font-size:5.0px;color:#505050;font-weight:normal;">USA</div>
<svg style="left:336.5px;top:228.00px" width="30" height="5" viewBox="0 0 30 5"><path transform="translate(0.00,0)" d="M2.5 0l0.74 1.55 1.7 0.2-1.25 1.17 0.33 1.7-1.52-0.84-1.52 0.84 0.33-1.7L0.06 1.75l1.7-0.2z" fill="#f8cc0c"/><path transform="translate(6.17,0)" d="M2.5 0l0.74 1.55 1.7 0.2-1.25 1.17 0.33 1.7-1.52-0.84-1.52 0.84 0.33-1.7L0.06 1.75l1.7-0.2z" fill="#f8cc0c"/><path transform="translate(12.34,0)" d="M2.5 0l0.74 1.55 1.7 0.2-1.25 1.17 0.33 1.7-1.52-0.84-1.52 0.84 0.33-1.7L0.06 1.75l1.7-0.2z" fill="#f8cc0c"/><path transform="translate(18.51,0)" d="M2.5 0l0.74 1.55 1.7 0.2-1.25 1.17 0.33 1.7-1.52-0.84-1.52 0.84 0.33-1.7L0.06 1.75l1.7-0.2z" fill="#f8cc0c"/><path transform="translate(24.68,0)" d="M2.5 0.55l0.6 1.3 1.42 0.17-1.05 0.98 0.28 1.42-1.25-0.7-1.25 0.7 0.28-1.42-1.05-0.98 1.42-0.17z" fill="none" stroke="#f8cc0c" stroke-width="0.65"/></svg>
<svg style="left:414.1px;top:228.60px" width="3.4" height="4.8" viewBox="0 0 3.4 4.8"><rect x="0.85" y="0" width="1.7" height="3.0" rx="0.85" fill="#2e2e2e"/><path d="M0.35 2.0v0.6a1.35 1.35 0 0 0 2.7 0V2.0" stroke="#2e2e2e" stroke-width="0.55" fill="none"/><rect x="1.45" y="3.9" width="0.5" height="0.9" fill="#2e2e2e"/></svg>
<div class="t n" style="left:418.80px;top:228.41px;font-size:5.0px;color:#3a3a3a;font-weight:normal;">Interview</div>
<div class="t" style="left:486.7px;top:227.50px;width:15.5px;height:7px;border-radius:0.9px;background:#5590dc;color:#fff;font-size:3.1px;line-height:8.8px;text-align:center">ACTIVE</div>
<div class="t n" style="left:544.70px;top:228.41px;font-size:5.0px;color:#3a8fd8;font-weight:normal;">Edit</div>
<div class="t n" style="left:560.90px;top:228.41px;font-size:5.0px;color:#e14c5c;font-weight:normal;transform:scaleX(1.05);transform-origin:0 0;">Delete</div>
<div class="b" style="left:42.3px;top:240.87px;width:8.7px;height:8.7px;border-radius:50%;overflow:hidden"><svg style="left:0;top:0" width="8.7" height="8.7" viewBox="0 0 10 10"><rect width="10" height="10" fill="#3a3030"/><path d="M0.8 10.5C0.8 7.6 2.8 6.9 5 6.9S9.2 7.6 9.2 10.5Z" fill="#e0e0e0"/><ellipse cx="5" cy="3.9" rx="2.6" ry="2.8" fill="#1a1010"/><ellipse cx="5" cy="4.8" rx="2.1" ry="2.5" fill="#d0a890"/></svg></div>
<div class="t" style="left:54.00px;top:242.76px;font-size:5.2px;color:#3170b8;font-weight:bold;transform:scaleX(0.965);transform-origin:0 0;">Earl Love</div>
<div class="t n" style="left:154.20px;top:242.93px;font-size:5.0px;color:#505050;font-weight:normal;">Senior Ruby Developer</div>
<div class="t n" style="left:283.00px;top:242.93px;font-size:5.0px;color:#505050;font-weight:normal;">Canada</div>
<svg style="left:336.5px;top:242.52px" width="30" height="5" viewBox="0 0 30 5"><path transform="translate(0.00,0)" d="M2.5 0l0.74 1.55 1.7 0.2-1.25 1.17 0.33 1.7-1.52-0.84-1.52 0.84 0.33-1.7L0.06 1.75l1.7-0.2z" fill="#f8cc0c"/><path transform="translate(6.17,0)" d="M2.5 0l0.74 1.55 1.7 0.2-1.25 1.17 0.33 1.7-1.52-0.84-1.52 0.84 0.33-1.7L0.06 1.75l1.7-0.2z" fill="#f8cc0c"/><path transform="translate(12.34,0)" d="M2.5 0l0.74 1.55 1.7 0.2-1.25 1.17 0.33 1.7-1.52-0.84-1.52 0.84 0.33-1.7L0.06 1.75l1.7-0.2z" fill="#f8cc0c"/><path transform="translate(18.51,0)" d="M2.5 0l0.74 1.55 1.7 0.2-1.25 1.17 0.33 1.7-1.52-0.84-1.52 0.84 0.33-1.7L0.06 1.75l1.7-0.2z" fill="#f8cc0c"/><path transform="translate(24.68,0)" d="M2.5 0.55l0.6 1.3 1.42 0.17-1.05 0.98 0.28 1.42-1.25-0.7-1.25 0.7 0.28-1.42-1.05-0.98 1.42-0.17z" fill="none" stroke="#f8cc0c" stroke-width="0.65"/></svg>
<svg style="left:413.5px;top:243.57px" width="4.7" height="4.1" viewBox="0 0 4.7 4.1"><circle cx="1.9" cy="1.8" r="1.35" stroke="#2e2e2e" stroke-width="0.9" fill="none"/><path d="M2.9 2.8l1.4 1.1" stroke="#2e2e2e" stroke-width="1.0"/></svg>
<div class="t n" style="left:420.70px;top:242.93px;font-size:5.0px;color:#3a3a3a;font-weight:normal;">Short List</div>
<div class="t" style="left:486.7px;top:242.02px;width:14px;height:7px;border-radius:0.9px;background:#35bfcf;color:#fff;font-size:3.1px;line-height:8.8px;text-align:center">HIRED</div>
<div class="t n" style="left:544.70px;top:242.93px;font-size:5.0px;color:#3a8fd8;font-weight:normal;">Edit</div>
<div class="t n" style="left:560.90px;top:242.93px;font-size:5.0px;color:#e14c5c;font-weight:normal;transform:scaleX(1.05);transform-origin:0 0;">Delete</div>
<div class="b" style="left:42.3px;top:255.39px;width:8.7px;height:8.7px;border-radius:50%;overflow:hidden"><svg style="left:0;top:0" width="8.7" height="8.7" viewBox="0 0 10 10"><rect width="10" height="10" fill="#c0b0a0"/><path d="M0.8 10.5C0.8 7.6 2.8 6.9 5 6.9S9.2 7.6 9.2 10.5Z" fill="#2a2a2a"/><ellipse cx="5" cy="3.9" rx="2.6" ry="2.8" fill="#7a6050"/><ellipse cx="5" cy="4.8" rx="2.1" ry="2.5" fill="#b89078"/></svg></div>
<div class="t" style="left:54.00px;top:257.28px;font-size:5.2px;color:#3170b8;font-weight:bold;transform:scaleX(0.965);transform-origin:0 0;">Isaac Gomez</div>
<div class="t n" style="left:154.20px;top:257.45px;font-size:5.0px;color:#505050;font-weight:normal;">Ruby On Rails Developer</div>
<div class="t n" style="left:283.00px;top:257.45px;font-size:5.0px;color:#505050;font-weight:normal;">France</div>
<svg style="left:336.5px;top:257.04px" width="30" height="5" viewBox="0 0 30 5"><path transform="translate(0.00,0)" d="M2.5 0l0.74 1.55 1.7 0.2-1.25 1.17 0.33 1.7-1.52-0.84-1.52 0.84 0.33-1.7L0.06 1.75l1.7-0.2z" fill="#f8cc0c"/><path transform="translate(6.17,0)" d="M2.5 0l0.74 1.55 1.7 0.2-1.25 1.17 0.33 1.7-1.52-0.84-1.52 0.84 0.33-1.7L0.06 1.75l1.7-0.2z" fill="#f8cc0c"/><path transform="translate(12.34,0)" d="M2.5 0l0.74 1.55 1.7 0.2-1.25 1.17 0.33 1.7-1.52-0.84-1.52 0.84 0.33-1.7L0.06 1.75l1.7-0.2z" fill="#f8cc0c"/><path transform="translate(18.51,0)" d="M2.5 0.55l0.6 1.3 1.42 0.17-1.05 0.98 0.28 1.42-1.25-0.7-1.25 0.7 0.28-1.42-1.05-0.98 1.42-0.17z" fill="none" stroke="#f8cc0c" stroke-width="0.65"/><path transform="translate(24.68,0)" d="M2.5 0.55l0.6 1.3 1.42 0.17-1.05 0.98 0.28 1.42-1.25-0.7-1.25 0.7 0.28-1.42-1.05-0.98 1.42-0.17z" fill="none" stroke="#f8cc0c" stroke-width="0.65"/></svg>
<svg style="left:414.1px;top:257.64px" width="3.4" height="4.8" viewBox="0 0 3.4 4.8"><rect x="0.85" y="0" width="1.7" height="3.0" rx="0.85" fill="#2e2e2e"/><path d="M0.35 2.0v0.6a1.35 1.35 0 0 0 2.7 0V2.0" stroke="#2e2e2e" stroke-width="0.55" fill="none"/><rect x="1.45" y="3.9" width="0.5" height="0.9" fill="#2e2e2e"/></svg>
<div class="t n" style="left:418.80px;top:257.45px;font-size:5.0px;color:#3a3a3a;font-weight:normal;">Interview</div>
<div class="t" style="left:486.7px;top:256.54px;width:15.5px;height:7px;border-radius:0.9px;background:#5590dc;color:#fff;font-size:3.1px;line-height:8.8px;text-align:center">ACTIVE</div>
<div class="t n" style="left:544.70px;top:257.45px;font-size:5.0px;color:#3a8fd8;font-weight:normal;">Edit</div>
<div class="t n" style="left:560.90px;top:257.45px;font-size:5.0px;color:#e14c5c;font-weight:normal;transform:scaleX(1.05);transform-origin:0 0;">Delete</div>
<div class="b" style="left:42.3px;top:269.91px;width:8.7px;height:8.7px;border-radius:50%;overflow:hidden"><svg style="left:0;top:0" width="8.7" height="8.7" viewBox="0 0 10 10"><rect width="10" height="10" fill="#121212"/><path d="M0.8 10.5C0.8 7.6 2.8 6.9 5 6.9S9.2 7.6 9.2 10.5Z" fill="#202020"/><ellipse cx="5" cy="3.9" rx="2.6" ry="2.8" fill="#101010"/><ellipse cx="5" cy="4.8" rx="2.1" ry="2.5" fill="#c09080"/></svg></div>
<div class="t" style="left:54.00px;top:271.80px;font-size:5.2px;color:#3170b8;font-weight:bold;transform:scaleX(0.965);transform-origin:0 0;">Roberto Doyle</div>
<div class="t n" style="left:154.20px;top:271.97px;font-size:5.0px;color:#505050;font-weight:normal;">Software Engineer</div>
<div class="t n" style="left:283.00px;top:271.97px;font-size:5.0px;color:#505050;font-weight:normal;">China</div>
<svg style="left:336.5px;top:271.56px" width="30" height="5" viewBox="0 0 30 5"><path transform="translate(0.00,0)" d="M2.5 0l0.74 1.55 1.7 0.2-1.25 1.17 0.33 1.7-1.52-0.84-1.52 0.84 0.33-1.7L0.06 1.75l1.7-0.2z" fill="#f8cc0c"/><path transform="translate(6.17,0)" d="M2.5 0l0.74 1.55 1.7 0.2-1.25 1.17 0.33 1.7-1.52-0.84-1.52 0.84 0.33-1.7L0.06 1.75l1.7-0.2z" fill="#f8cc0c"/><path transform="translate(12.34,0)" d="M2.5 0l0.74 1.55 1.7 0.2-1.25 1.17 0.33 1.7-1.52-0.84-1.52 0.84 0.33-1.7L0.06 1.75l1.7-0.2z" fill="#f8cc0c"/><path transform="translate(18.51,0)" d="M2.5 0l0.74 1.55 1.7 0.2-1.25 1.17 0.33 1.7-1.52-0.84-1.52 0.84 0.33-1.7L0.06 1.75l1.7-0.2z" fill="#f8cc0c"/><path transform="translate(24.68,0)" d="M2.5 0l0.74 1.55 1.7 0.2-1.25 1.17 0.33 1.7-1.52-0.84-1.52 0.84 0.33-1.7L0.06 1.75l1.7-0.2z" fill="#f8cc0c"/></svg>
<svg style="left:413.9px;top:273.06px" width="4.2" height="3.2" viewBox="0 0 4.2 3.2"><path d="M0.35 1.5L1.5 2.7L3.9 0.35" stroke="#2e2e2e" stroke-width="1.1" fill="none"/></svg>
<div class="t n" style="left:421.00px;top:271.97px;font-size:5.0px;color:#3a3a3a;font-weight:normal;">Hired</div>
<div class="t" style="left:486.7px;top:271.06px;width:14px;height:7px;border-radius:0.9px;background:#35bfcf;color:#fff;font-size:3.1px;line-height:8.8px;text-align:center">HIRED</div>
<div class="t n" style="left:544.70px;top:271.97px;font-size:5.0px;color:#3a8fd8;font-weight:normal;">Edit</div>
<div class="t n" style="left:560.90px;top:271.97px;font-size:5.0px;color:#e14c5c;font-weight:normal;transform:scaleX(1.05);transform-origin:0 0;">Delete</div>
<div class="b" style="left:42.3px;top:284.43px;width:8.7px;height:8.7px;border-radius:50%;overflow:hidden"><svg style="left:0;top:0" width="8.7" height="8.7" viewBox="0 0 10 10"><rect width="10" height="10" fill="#d8d8d8"/><path d="M0.8 10.5C0.8 7.6 2.8 6.9 5 6.9S9.2 7.6 9.2 10.5Z" fill="#7090b0"/><ellipse cx="5" cy="3.9" rx="2.6" ry="2.8" fill="#6a4838"/><ellipse cx="5" cy="4.8" rx="2.1" ry="2.5" fill="#c08878"/></svg></div>
<div class="t" style="left:54.00px;top:286.32px;font-size:5.2px;color:#3170b8;font-weight:bold;transform:scaleX(0.965);transform-origin:0 0;">Elena Sanders</div>
<div class="t n" style="left:154.20px;top:286.49px;font-size:5.0px;color:#505050;font-weight:normal;">Senior Elixir Developer</div>
<div class="t n" style="left:283.00px;top:286.49px;font-size:5.0px;color:#505050;font-weight:normal;">Portugal</div>
<svg style="left:336.5px;top:286.08px" width="30" height="5" viewBox="0 0 30 5"><path transform="translate(0.00,0)" d="M2.5 0l0.74 1.55 1.7 0.2-1.25 1.17 0.33 1.7-1.52-0.84-1.52 0.84 0.33-1.7L0.06 1.75l1.7-0.2z" fill="#f8cc0c"/><path transform="translate(6.17,0)" d="M2.5 0l0.74 1.55 1.7 0.2-1.25 1.17 0.33 1.7-1.52-0.84-1.52 0.84 0.33-1.7L0.06 1.75l1.7-0.2z" fill="#f8cc0c"/><path transform="translate(12.34,0)" d="M2.5 0l0.74 1.55 1.7 0.2-1.25 1.17 0.33 1.7-1.52-0.84-1.52 0.84 0.33-1.7L0.06 1.75l1.7-0.2z" fill="#f8cc0c"/><path transform="translate(18.51,0)" d="M2.5 0l0.74 1.55 1.7 0.2-1.25 1.17 0.33 1.7-1.52-0.84-1.52 0.84 0.33-1.7L0.06 1.75l1.7-0.2z" fill="#f8cc0c"/><path transform="translate(24.68,0)" d="M2.5 0.55l0.6 1.3 1.42 0.17-1.05 0.98 0.28 1.42-1.25-0.7-1.25 0.7 0.28-1.42-1.05-0.98 1.42-0.17z" fill="none" stroke="#f8cc0c" stroke-width="0.65"/></svg>
<svg style="left:414.1px;top:286.68px" width="3.4" height="4.8" viewBox="0 0 3.4 4.8"><rect x="0.85" y="0" width="1.7" height="3.0" rx="0.85" fill="#2e2e2e"/><path d="M0.35 2.0v0.6a1.35 1.35 0 0 0 2.7 0V2.0" stroke="#2e2e2e" stroke-width="0.55" fill="none"/><rect x="1.45" y="3.9" width="0.5" height="0.9" fill="#2e2e2e"/></svg>
<div class="t n" style="left:418.80px;top:286.49px;font-size:5.0px;color:#3a3a3a;font-weight:normal;">Interview</div>
<div class="t" style="left:486.7px;top:285.58px;width:12px;height:7px;border-radius:0.9px;background:#f2c11a;color:#fff;font-size:3.1px;line-height:8.8px;text-align:center">BUSY</div>
<div class="t n" style="left:544.70px;top:286.49px;font-size:5.0px;color:#3a8fd8;font-weight:normal;">Edit</div>
<div class="t n" style="left:560.90px;top:286.49px;font-size:5.0px;color:#e14c5c;font-weight:normal;transform:scaleX(1.05);transform-origin:0 0;">Delete</div>
<div class="b" style="left:42.3px;top:298.95px;width:8.7px;height:8.7px;border-radius:50%;overflow:hidden"><svg style="left:0;top:0" width="8.7" height="8.7" viewBox="0 0 10 10"><rect width="10" height="10" fill="#2a2424"/><path d="M0.8 10.5C0.8 7.6 2.8 6.9 5 6.9S9.2 7.6 9.2 10.5Z" fill="#d0d0d0"/><ellipse cx="5" cy="3.9" rx="2.6" ry="2.8" fill="#1a1414"/><ellipse cx="5" cy="4.8" rx="2.1" ry="2.5" fill="#c8a090"/></svg></div>
<div class="t" style="left:54.00px;top:300.84px;font-size:5.2px;color:#3170b8;font-weight:bold;transform:scaleX(0.965);transform-origin:0 0;">Ernesto Munoz</div>
<div class="t n" style="left:154.20px;top:301.01px;font-size:5.0px;color:#505050;font-weight:normal;">System Engineer</div>
<div class="t n" style="left:283.00px;top:301.01px;font-size:5.0px;color:#505050;font-weight:normal;">Italy</div>
<svg style="left:336.5px;top:300.60px" width="30" height="5" viewBox="0 0 30 5"><path transform="translate(0.00,0)" d="M2.5 0l0.74 1.55 1.7 0.2-1.25 1.17 0.33 1.7-1.52-0.84-1.52 0.84 0.33-1.7L0.06 1.75l1.7-0.2z" fill="#f8cc0c"/><path transform="translate(6.17,0)" d="M2.5 0l0.74 1.55 1.7 0.2-1.25 1.17 0.33 1.7-1.52-0.84-1.52 0.84 0.33-1.7L0.06 1.75l1.7-0.2z" fill="#f8cc0c"/><path transform="translate(12.34,0)" d="M2.5 0l0.74 1.55 1.7 0.2-1.25 1.17 0.33 1.7-1.52-0.84-1.52 0.84 0.33-1.7L0.06 1.75l1.7-0.2z" fill="#f8cc0c"/><path transform="translate(18.51,0)" d="M2.5 0l0.74 1.55 1.7 0.2-1.25 1.17 0.33 1.7-1.52-0.84-1.52 0.84 0.33-1.7L0.06 1.75l1.7-0.2z" fill="#f8cc0c"/><path transform="translate(24.68,0)" d="M2.5 0l0.74 1.55 1.7 0.2-1.25 1.17 0.33 1.7-1.52-0.84-1.52 0.84 0.33-1.7L0.06 1.75l1.7-0.2z" fill="#f8cc0c"/></svg>
<svg style="left:414.1px;top:301.74px" width="3.6" height="3.2" viewBox="0 0 3.6 3.2"><path d="M0.5 0.4l2.6 2.4M3.1 0.4l-2.6 2.4" stroke="#2e2e2e" stroke-width="1.1"/></svg>
<div class="t n" style="left:419.70px;top:301.01px;font-size:5.0px;color:#3a3a3a;font-weight:normal;">Rejected</div>
<div class="t" style="left:486.7px;top:300.10px;width:21px;height:7px;border-radius:0.9px;background:#e9626f;color:#fff;font-size:3.1px;line-height:8.8px;text-align:center">ARCHIVED</div>
<div class="t n" style="left:544.70px;top:301.01px;font-size:5.0px;color:#3a8fd8;font-weight:normal;">Edit</div>
<div class="t n" style="left:560.90px;top:301.01px;font-size:5.0px;color:#e14c5c;font-weight:normal;transform:scaleX(1.05);transform-origin:0 0;">Delete</div>
<div class="b" style="left:42.3px;top:313.47px;width:8.7px;height:8.7px;border-radius:50%;overflow:hidden"><svg style="left:0;top:0" width="8.7" height="8.7" viewBox="0 0 10 10"><rect width="10" height="10" fill="#e0d8d0"/><path d="M0.8 10.5C0.8 7.6 2.8 6.9 5 6.9S9.2 7.6 9.2 10.5Z" fill="#404040"/><ellipse cx="5" cy="3.9" rx="2.6" ry="2.8" fill="#202020"/><ellipse cx="5" cy="4.8" rx="2.1" ry="2.5" fill="#c8a898"/></svg></div>
<div class="t" style="left:54.00px;top:315.36px;font-size:5.2px;color:#3170b8;font-weight:bold;transform:scaleX(0.965);transform-origin:0 0;">Eddie Shaw</div>
<div class="t n" style="left:154.20px;top:315.53px;font-size:5.0px;color:#505050;font-weight:normal;">Junior Ruby Developer</div>
<div class="t n" style="left:283.00px;top:315.53px;font-size:5.0px;color:#505050;font-weight:normal;">Brazil</div>
<svg style="left:336.5px;top:315.12px" width="30" height="5" viewBox="0 0 30 5"><path transform="translate(0.00,0)" d="M2.5 0l0.74 1.55 1.7 0.2-1.25 1.17 0.33 1.7-1.52-0.84-1.52 0.84 0.33-1.7L0.06 1.75l1.7-0.2z" fill="#f8cc0c"/><path transform="translate(6.17,0)" d="M2.5 0l0.74 1.55 1.7 0.2-1.25 1.17 0.33 1.7-1.52-0.84-1.52 0.84 0.33-1.7L0.06 1.75l1.7-0.2z" fill="#f8cc0c"/><path transform="translate(12.34,0)" d="M2.5 0l0.74 1.55 1.7 0.2-1.25 1.17 0.33 1.7-1.52-0.84-1.52 0.84 0.33-1.7L0.06 1.75l1.7-0.2z" fill="#f8cc0c"/><path transform="translate(18.51,0)" d="M2.5 0l0.74 1.55 1.7 0.2-1.25 1.17 0.33 1.7-1.52-0.84-1.52 0.84 0.33-1.7L0.06 1.75l1.7-0.2z" fill="#f8cc0c"/><path transform="translate(24.68,0)" d="M2.5 0.55l0.6 1.3 1.42 0.17-1.05 0.98 0.28 1.42-1.25-0.7-1.25 0.7 0.28-1.42-1.05-0.98 1.42-0.17z" fill="none" stroke="#f8cc0c" stroke-width="0.65"/></svg>
<svg style="left:414.1px;top:315.72px" width="3.4" height="4.8" viewBox="0 0 3.4 4.8"><rect x="0.85" y="0" width="1.7" height="3.0" rx="0.85" fill="#2e2e2e"/><path d="M0.35 2.0v0.6a1.35 1.35 0 0 0 2.7 0V2.0" stroke="#2e2e2e" stroke-width="0.55" fill="none"/><rect x="1.45" y="3.9" width="0.5" height="0.9" fill="#2e2e2e"/></svg>
<div class="t n" style="left:418.80px;top:315.53px;font-size:5.0px;color:#3a3a3a;font-weight:normal;">Interview</div>
<div class="t" style="left:486.7px;top:314.62px;width:15.5px;height:7px;border-radius:0.9px;background:#5590dc;color:#fff;font-size:3.1px;line-height:8.8px;text-align:center">ACTIVE</div>
<div class="t n" style="left:544.70px;top:315.53px;font-size:5.0px;color:#3a8fd8;font-weight:normal;">Edit</div>
<div class="t n" style="left:560.90px;top:315.53px;font-size:5.0px;color:#e14c5c;font-weight:normal;transform:scaleX(1.05);transform-origin:0 0;">Delete</div>
<div class="b" style="left:42.3px;top:327.99px;width:8.7px;height:8.7px;border-radius:50%;overflow:hidden"><svg style="left:0;top:0" width="8.7" height="8.7" viewBox="0 0 10 10"><rect width="10" height="10" fill="#6a7a88"/><path d="M0.8 10.5C0.8 7.6 2.8 6.9 5 6.9S9.2 7.6 9.2 10.5Z" fill="#8898a8"/><ellipse cx="5" cy="3.9" rx="2.6" ry="2.8" fill="#3a3a3a"/><ellipse cx="5" cy="4.8" rx="2.1" ry="2.5" fill="#c0a898"/></svg></div>
<div class="t" style="left:54.80px;top:329.88px;font-size:5.2px;color:#3170b8;font-weight:bold;transform:scaleX(0.965);transform-origin:0 0;">John Doe</div>
<div class="t n" style="left:154.20px;top:330.05px;font-size:5.0px;color:#505050;font-weight:normal;">Ruby Developer</div>
<div class="t n" style="left:283.00px;top:330.05px;font-size:5.0px;color:#505050;font-weight:normal;">USA</div>
<svg style="left:336.5px;top:329.64px" width="30" height="5" viewBox="0 0 30 5"><path transform="translate(0.00,0)" d="M2.5 0l0.74 1.55 1.7 0.2-1.25 1.17 0.33 1.7-1.52-0.84-1.52 0.84 0.33-1.7L0.06 1.75l1.7-0.2z" fill="#f8cc0c"/><path transform="translate(6.17,0)" d="M2.5 0l0.74 1.55 1.7 0.2-1.25 1.17 0.33 1.7-1.52-0.84-1.52 0.84 0.33-1.7L0.06 1.75l1.7-0.2z" fill="#f8cc0c"/><path transform="translate(12.34,0)" d="M2.5 0l0.74 1.55 1.7 0.2-1.25 1.17 0.33 1.7-1.52-0.84-1.52 0.84 0.33-1.7L0.06 1.75l1.7-0.2z" fill="#f8cc0c"/><path transform="translate(18.51,0)" d="M2.5 0l0.74 1.55 1.7 0.2-1.25 1.17 0.33 1.7-1.52-0.84-1.52 0.84 0.33-1.7L0.06 1.75l1.7-0.2z" fill="#f8cc0c"/><path transform="translate(24.68,0)" d="M2.5 0.55l0.6 1.3 1.42 0.17-1.05 0.98 0.28 1.42-1.25-0.7-1.25 0.7 0.28-1.42-1.05-0.98 1.42-0.17z" fill="none" stroke="#f8cc0c" stroke-width="0.65"/></svg>
<svg style="left:414.1px;top:330.24px" width="3.4" height="4.8" viewBox="0 0 3.4 4.8"><rect x="0.85" y="0" width="1.7" height="3.0" rx="0.85" fill="#2e2e2e"/><path d="M0.35 2.0v0.6a1.35 1.35 0 0 0 2.7 0V2.0" stroke="#2e2e2e" stroke-width="0.55" fill="none"/><rect x="1.45" y="3.9" width="0.5" height="0.9" fill="#2e2e2e"/></svg>
<div class="t n" style="left:418.80px;top:330.05px;font-size:5.0px;color:#3a3a3a;font-weight:normal;">Interview</div>
<div class="t" style="left:486.7px;top:329.14px;width:15.5px;height:7px;border-radius:0.9px;background:#5590dc;color:#fff;font-size:3.1px;line-height:8.8px;text-align:center">ACTIVE</div>
<div class="t n" style="left:544.70px;top:330.05px;font-size:5.0px;color:#3a8fd8;font-weight:normal;">Edit</div>
<div class="t n" style="left:560.90px;top:330.05px;font-size:5.0px;color:#e14c5c;font-weight:normal;transform:scaleX(1.05);transform-origin:0 0;">Delete</div>
<div class="b" style="left:42.3px;top:342.51px;width:8.7px;height:8.7px;border-radius:50%;overflow:hidden"><svg style="left:0;top:0" width="8.7" height="8.7" viewBox="0 0 10 10"><rect width="10" height="10" fill="#3a3030"/><path d="M0.8 10.5C0.8 7.6 2.8 6.9 5 6.9S9.2 7.6 9.2 10.5Z" fill="#e0e0e0"/><ellipse cx="5" cy="3.9" rx="2.6" ry="2.8" fill="#1a1010"/><ellipse cx="5" cy="4.8" rx="2.1" ry="2.5" fill="#d0a890"/></svg></div>
<div class="t" style="left:54.00px;top:344.40px;font-size:5.2px;color:#3170b8;font-weight:bold;transform:scaleX(0.965);transform-origin:0 0;">Earl Love</div>
<div class="t n" style="left:154.20px;top:344.57px;font-size:5.0px;color:#505050;font-weight:normal;">Senior Ruby Developer</div>
<div class="t n" style="left:283.00px;top:344.57px;font-size:5.0px;color:#505050;font-weight:normal;">Canada</div>
<svg style="left:336.5px;top:344.16px" width="30" height="5" viewBox="0 0 30 5"><path transform="translate(0.00,0)" d="M2.5 0l0.74 1.55 1.7 0.2-1.25 1.17 0.33 1.7-1.52-0.84-1.52 0.84 0.33-1.7L0.06 1.75l1.7-0.2z" fill="#f8cc0c"/><path transform="translate(6.17,0)" d="M2.5 0l0.74 1.55 1.7 0.2-1.25 1.17 0.33 1.7-1.52-0.84-1.52 0.84 0.33-1.7L0.06 1.75l1.7-0.2z" fill="#f8cc0c"/><path transform="translate(12.34,0)" d="M2.5 0l0.74 1.55 1.7 0.2-1.25 1.17 0.33 1.7-1.52-0.84-1.52 0.84 0.33-1.7L0.06 1.75l1.7-0.2z" fill="#f8cc0c"/><path transform="translate(18.51,0)" d="M2.5 0l0.74 1.55 1.7 0.2-1.25 1.17 0.33 1.7-1.52-0.84-1.52 0.84 0.33-1.7L0.06 1.75l1.7-0.2z" fill="#f8cc0c"/><path transform="translate(24.68,0)" d="M2.5 0.55l0.6 1.3 1.42 0.17-1.05 0.98 0.28 1.42-1.25-0.7-1.25 0.7 0.28-1.42-1.05-0.98 1.42-0.17z" fill="none" stroke="#f8cc0c" stroke-width="0.65"/></svg>
<svg style="left:413.5px;top:345.21px" width="4.7" height="4.1" viewBox="0 0 4.7 4.1"><circle cx="1.9" cy="1.8" r="1.35" stroke="#2e2e2e" stroke-width="0.9" fill="none"/><path d="M2.9 2.8l1.4 1.1" stroke="#2e2e2e" stroke-width="1.0"/></svg>
<div class="t n" style="left:420.70px;top:344.57px;font-size:5.0px;color:#3a3a3a;font-weight:normal;">Short List</div>
<div class="t" style="left:486.7px;top:343.66px;width:14px;height:7px;border-radius:0.9px;background:#35bfcf;color:#fff;font-size:3.1px;line-height:8.8px;text-align:center">HIRED</div>
<div class="t n" style="left:544.70px;top:344.57px;font-size:5.0px;color:#3a8fd8;font-weight:normal;">Edit</div>
<div class="t n" style="left:560.90px;top:344.57px;font-size:5.0px;color:#e14c5c;font-weight:normal;transform:scaleX(1.05);transform-origin:0 0;">Delete</div>
<div class="b" style="left:42.3px;top:357.03px;width:8.7px;height:8.7px;border-radius:50%;overflow:hidden"><svg style="left:0;top:0" width="8.7" height="8.7" viewBox="0 0 10 10"><rect width="10" height="10" fill="#c0b0a0"/><path d="M0.8 10.5C0.8 7.6 2.8 6.9 5 6.9S9.2 7.6 9.2 10.5Z" fill="#2a2a2a"/><ellipse cx="5" cy="3.9" rx="2.6" ry="2.8" fill="#7a6050"/><ellipse cx="5" cy="4.8" rx="2.1" ry="2.5" fill="#b89078"/></svg></div>
<div class="t" style="left:54.00px;top:358.92px;font-size:5.2px;color:#3170b8;font-weight:bold;transform:scaleX(0.965);transform-origin:0 0;">Isaac Gomez</div>
<div class="t n" style="left:154.20px;top:359.09px;font-size:5.0px;color:#505050;font-weight:normal;">Ruby On Rails Developer</div>
<div class="t n" style="left:283.00px;top:359.09px;font-size:5.0px;color:#505050;font-weight:normal;">France</div>
<svg style="left:336.5px;top:358.68px" width="30" height="5" viewBox="0 0 30 5"><path transform="translate(0.00,0)" d="M2.5 0l0.74 1.55 1.7 0.2-1.25 1.17 0.33 1.7-1.52-0.84-1.52 0.84 0.33-1.7L0.06 1.75l1.7-0.2z" fill="#f8cc0c"/><path transform="translate(6.17,0)" d="M2.5 0l0.74 1.55 1.7 0.2-1.25 1.17 0.33 1.7-1.52-0.84-1.52 0.84 0.33-1.7L0.06 1.75l1.7-0.2z" fill="#f8cc0c"/><path transform="translate(12.34,0)" d="M2.5 0l0.74 1.55 1.7 0.2-1.25 1.17 0.33 1.7-1.52-0.84-1.52 0.84 0.33-1.7L0.06 1.75l1.7-0.2z" fill="#f8cc0c"/><path transform="translate(18.51,0)" d="M2.5 0.55l0.6 1.3 1.42 0.17-1.05 0.98 0.28 1.42-1.25-0.7-1.25 0.7 0.28-1.42-1.05-0.98 1.42-0.17z" fill="none" stroke="#f8cc0c" stroke-width="0.65"/><path transform="translate(24.68,0)" d="M2.5 0.55l0.6 1.3 1.42 0.17-1.05 0.98 0.28 1.42-1.25-0.7-1.25 0.7 0.28-1.42-1.05-0.98 1.42-0.17z" fill="none" stroke="#f8cc0c" stroke-width="0.65"/></svg>
<svg style="left:414.1px;top:359.28px" width="3.4" height="4.8" viewBox="0 0 3.4 4.8"><rect x="0.85" y="0" width="1.7" height="3.0" rx="0.85" fill="#2e2e2e"/><path d="M0.35 2.0v0.6a1.35 1.35 0 0 0 2.7 0V2.0" stroke="#2e2e2e" stroke-width="0.55" fill="none"/><rect x="1.45" y="3.9" width="0.5" height="0.9" fill="#2e2e2e"/></svg>
<div class="t n" style="left:418.80px;top:359.09px;font-size:5.0px;color:#3a3a3a;font-weight:normal;">Interview</div>
<div class="t" style="left:486.7px;top:358.18px;width:15.5px;height:7px;border-radius:0.9px;background:#5590dc;color:#fff;font-size:3.1px;line-height:8.8px;text-align:center">ACTIVE</div>
<div class="t n" style="left:544.70px;top:359.09px;font-size:5.0px;color:#3a8fd8;font-weight:normal;">Edit</div>
<div class="t n" style="left:560.90px;top:359.09px;font-size:5.0px;color:#e14c5c;font-weight:normal;transform:scaleX(1.05);transform-origin:0 0;">Delete</div>
<div class="b" style="left:42.3px;top:371.55px;width:8.7px;height:8.7px;border-radius:50%;overflow:hidden"><svg style="left:0;top:0" width="8.7" height="8.7" viewBox="0 0 10 10"><rect width="10" height="10" fill="#121212"/><path d="M0.8 10.5C0.8 7.6 2.8 6.9 5 6.9S9.2 7.6 9.2 10.5Z" fill="#202020"/><ellipse cx="5" cy="3.9" rx="2.6" ry="2.8" fill="#101010"/><ellipse cx="5" cy="4.8" rx="2.1" ry="2.5" fill="#c09080"/></svg></div>
<div class="t" style="left:54.00px;top:373.44px;font-size:5.2px;color:#3170b8;font-weight:bold;transform:scaleX(0.965);transform-origin:0 0;">Roberto Doyle</div>
<div class="t n" style="left:154.20px;top:373.61px;font-size:5.0px;color:#505050;font-weight:normal;">Software Engineer</div>
<div class="t n" style="left:283.00px;top:373.61px;font-size:5.0px;color:#505050;font-weight:normal;">China</div>
<svg style="left:336.5px;top:373.20px" width="30" height="5" viewBox="0 0 30 5"><path transform="translate(0.00,0)" d="M2.5 0l0.74 1.55 1.7 0.2-1.25 1.17 0.33 1.7-1.52-0.84-1.52 0.84 0.33-1.7L0.06 1.75l1.7-0.2z" fill="#f8cc0c"/><path transform="translate(6.17,0)" d="M2.5 0l0.74 1.55 1.7 0.2-1.25 1.17 0.33 1.7-1.52-0.84-1.52 0.84 0.33-1.7L0.06 1.75l1.7-0.2z" fill="#f8cc0c"/><path transform="translate(12.34,0)" d="M2.5 0l0.74 1.55 1.7 0.2-1.25 1.17 0.33 1.7-1.52-0.84-1.52 0.84 0.33-1.7L0.06 1.75l1.7-0.2z" fill="#f8cc0c"/><path transform="translate(18.51,0)" d="M2.5 0l0.74 1.55 1.7 0.2-1.25 1.17 0.33 1.7-1.52-0.84-1.52 0.84 0.33-1.7L0.06 1.75l1.7-0.2z" fill="#f8cc0c"/><path transform="translate(24.68,0)" d="M2.5 0l0.74 1.55 1.7 0.2-1.25 1.17 0.33 1.7-1.52-0.84-1.52 0.84 0.33-1.7L0.06 1.75l1.7-0.2z" fill="#f8cc0c"/></svg>
<svg style="left:413.9px;top:374.70px" width="4.2" height="3.2" viewBox="0 0 4.2 3.2"><path d="M0.35 1.5L1.5 2.7L3.9 0.35" stroke="#2e2e2e" stroke-width="1.1" fill="none"/></svg>
<div class="t n" style="left:421.00px;top:373.61px;font-size:5.0px;color:#3a3a3a;font-weight:normal;">Hired</div>
<div class="t" style="left:486.7px;top:372.70px;width:14px;height:7px;border-radius:0.9px;background:#35bfcf;color:#fff;font-size:3.1px;line-height:8.8px;text-align:center">HIRED</div>
<div class="t n" style="left:544.70px;top:373.61px;font-size:5.0px;color:#3a8fd8;font-weight:normal;">Edit</div>
<div class="t n" style="left:560.90px;top:373.61px;font-size:5.0px;color:#e14c5c;font-weight:normal;transform:scaleX(1.05);transform-origin:0 0;">Delete</div>
<div class="b" style="left:42.3px;top:386.07px;width:8.7px;height:8.7px;border-radius:50%;overflow:hidden"><svg style="left:0;top:0" width="8.7" height="8.7" viewBox="0 0 10 10"><rect width="10" height="10" fill="#d8d8d8"/><path d="M0.8 10.5C0.8 7.6 2.8 6.9 5 6.9S9.2 7.6 9.2 10.5Z" fill="#7090b0"/><ellipse cx="5" cy="3.9" rx="2.6" ry="2.8" fill="#6a4838"/><ellipse cx="5" cy="4.8" rx="2.1" ry="2.5" fill="#c08878"/></svg></div>
<div class="t" style="left:54.00px;top:387.96px;font-size:5.2px;color:#3170b8;font-weight:bold;transform:scaleX(0.965);transform-origin:0 0;">Elena Sanders</div>
<div class="t n" style="left:154.20px;top:388.13px;font-size:5.0px;color:#505050;font-weight:normal;">Senior Elixir Developer</div>
<div class="t n" style="left:283.00px;top:388.13px;font-size:5.0px;color:#505050;font-weight:normal;">Portugal</div>
<svg style="left:336.5px;top:387.72px" width="30" height="5" viewBox="0 0 30 5"><path transform="translate(0.00,0)" d="M2.5 0l0.74 1.55 1.7 0.2-1.25 1.17 0.33 1.7-1.52-0.84-1.52 0.84 0.33-1.7L0.06 1.75l1.7-0.2z" fill="#f8cc0c"/><path transform="translate(6.17,0)" d="M2.5 0l0.74 1.55 1.7 0.2-1.25 1.17 0.33 1.7-1.52-0.84-1.52 0.84 0.33-1.7L0.06 1.75l1.7-0.2z" fill="#f8cc0c"/><path transform="translate(12.34,0)" d="M2.5 0l0.74 1.55 1.7 0.2-1.25 1.17 0.33 1.7-1.52-0.84-1.52 0.84 0.33-1.7L0.06 1.75l1.7-0.2z" fill="#f8cc0c"/><path transform="translate(18.51,0)" d="M2.5 0l0.74 1.55 1.7 0.2-1.25 1.17 0.33 1.7-1.52-0.84-1.52 0.84 0.33-1.7L0.06 1.75l1.7-0.2z" fill="#f8cc0c"/><path transform="translate(24.68,0)" d="M2.5 0.55l0.6 1.3 1.42 0.17-1.05 0.98 0.28 1.42-1.25-0.7-1.25 0.7 0.28-1.42-1.05-0.98 1.42-0.17z" fill="none" stroke="#f8cc0c" stroke-width="0.65"/></svg>
<svg style="left:414.1px;top:388.32px" width="3.4" height="4.8" viewBox="0 0 3.4 4.8"><rect x="0.85" y="0" width="1.7" height="3.0" rx="0.85" fill="#2e2e2e"/><path d="M0.35 2.0v0.6a1.35 1.35 0 0 0 2.7 0V2.0" stroke="#2e2e2e" stroke-width="0.55" fill="none"/><rect x="1.45" y="3.9" width="0.5" height="0.9" fill="#2e2e2e"/></svg>
<div class="t n" style="left:418.80px;top:388.13px;font-size:5.0px;color:#3a3a3a;font-weight:normal;">Interview</div>
<div class="t" style="left:486.7px;top:387.22px;width:12px;height:7px;border-radius:0.9px;background:#f2c11a;color:#fff;font-size:3.1px;line-height:8.8px;text-align:center">BUSY</div>
<div class="t n" style="left:544.70px;top:388.13px;font-size:5.0px;color:#3a8fd8;font-weight:normal;">Edit</div>
<div class="t n" style="left:560.90px;top:388.13px;font-size:5.0px;color:#e14c5c;font-weight:normal;transform:scaleX(1.05);transform-origin:0 0;">Delete</div>
<div class="b" style="left:42.3px;top:400.59px;width:8.7px;height:8.7px;border-radius:50%;overflow:hidden"><svg style="left:0;top:0" width="8.7" height="8.7" viewBox="0 0 10 10"><rect width="10" height="10" fill="#2a2424"/><path d="M0.8 10.5C0.8 7.6 2.8 6.9 5 6.9S9.2 7.6 9.2 10.5Z" fill="#d0d0d0"/><ellipse cx="5" cy="3.9" rx="2.6" ry="2.8" fill="#1a1414"/><ellipse cx="5" cy="4.8" rx="2.1" ry="2.5" fill="#c8a090"/></svg></div>
<div class="t" style="left:54.00px;top:402.48px;font-size:5.2px;color:#3170b8;font-weight:bold;transform:scaleX(0.965);transform-origin:0 0;">Ernesto Munoz</div>
<div class="t n" style="left:154.20px;top:402.65px;font-size:5.0px;color:#505050;font-weight:normal;">System Engineer</div>
<div class="t n" style="left:283.00px;top:402.65px;font-size:5.0px;color:#505050;font-weight:normal;">Italy</div>
<svg style="left:336.5px;top:402.24px" width="30" height="5" viewBox="0 0 30 5"><path transform="translate(0.00,0)" d="M2.5 0l0.74 1.55 1.7 0.2-1.25 1.17 0.33 1.7-1.52-0.84-1.52 0.84 0.33-1.7L0.06 1.75l1.7-0.2z" fill="#f8cc0c"/><path transform="translate(6.17,0)" d="M2.5 0l0.74 1.55 1.7 0.2-1.25 1.17 0.33 1.7-1.52-0.84-1.52 0.84 0.33-1.7L0.06 1.75l1.7-0.2z" fill="#f8cc0c"/><path transform="translate(12.34,0)" d="M2.5 0l0.74 1.55 1.7 0.2-1.25 1.17 0.33 1.7-1.52-0.84-1.52 0.84 0.33-1.7L0.06 1.75l1.7-0.2z" fill="#f8cc0c"/><path transform="translate(18.51,0)" d="M2.5 0l0.74 1.55 1.7 0.2-1.25 1.17 0.33 1.7-1.52-0.84-1.52 0.84 0.33-1.7L0.06 1.75l1.7-0.2z" fill="#f8cc0c"/><path transform="translate(24.68,0)" d="M2.5 0l0.74 1.55 1.7 0.2-1.25 1.17 0.33 1.7-1.52-0.84-1.52 0.84 0.33-1.7L0.06 1.75l1.7-0.2z" fill="#f8cc0c"/></svg>
<svg style="left:414.1px;top:403.38px" width="3.6" height="3.2" viewBox="0 0 3.6 3.2"><path d="M0.5 0.4l2.6 2.4M3.1 0.4l-2.6 2.4" stroke="#2e2e2e" stroke-width="1.1"/></svg>
<div class="t n" style="left:419.70px;top:402.65px;font-size:5.0px;color:#3a3a3a;font-weight:normal;">Rejected</div>
<div class="t" style="left:486.7px;top:401.74px;width:21px;height:7px;border-radius:0.9px;background:#e9626f;color:#fff;font-size:3.1px;line-height:8.8px;text-align:center">ARCHIVED</div>
<div class="t n" style="left:544.70px;top:402.65px;font-size:5.0px;color:#3a8fd8;font-weight:normal;">Edit</div>
<div class="t n" style="left:560.90px;top:402.65px;font-size:5.0px;color:#e14c5c;font-weight:normal;transform:scaleX(1.05);transform-origin:0 0;">Delete</div>
<div class="b" style="left:42.3px;top:415.11px;width:8.7px;height:8.7px;border-radius:50%;overflow:hidden"><svg style="left:0;top:0" width="8.7" height="8.7" viewBox="0 0 10 10"><rect width="10" height="10" fill="#8a9a58"/><path d="M0.8 10.5C0.8 7.6 2.8 6.9 5 6.9S9.2 7.6 9.2 10.5Z" fill="#c8c0b0"/><ellipse cx="5" cy="3.9" rx="2.6" ry="2.8" fill="#7a6048"/><ellipse cx="5" cy="4.8" rx="2.1" ry="2.5" fill="#dcbca4"/></svg></div>
<div class="t" style="left:54.80px;top:417.00px;font-size:5.2px;color:#3170b8;font-weight:bold;transform:scaleX(0.965);transform-origin:0 0;">John Doe</div>
<div class="t n" style="left:154.20px;top:417.17px;font-size:5.0px;color:#505050;font-weight:normal;">Ruby Developer</div>
<div class="t n" style="left:283.00px;top:417.17px;font-size:5.0px;color:#505050;font-weight:normal;">USA</div>
<svg style="left:336.5px;top:416.76px" width="30" height="5" viewBox="0 0 30 5"><path transform="translate(0.00,0)" d="M2.5 0l0.74 1.55 1.7 0.2-1.25 1.17 0.33 1.7-1.52-0.84-1.52 0.84 0.33-1.7L0.06 1.75l1.7-0.2z" fill="#f8cc0c"/><path transform="translate(6.17,0)" d="M2.5 0l0.74 1.55 1.7 0.2-1.25 1.17 0.33 1.7-1.52-0.84-1.52 0.84 0.33-1.7L0.06 1.75l1.7-0.2z" fill="#f8cc0c"/><path transform="translate(12.34,0)" d="M2.5 0l0.74 1.55 1.7 0.2-1.25 1.17 0.33 1.7-1.52-0.84-1.52 0.84 0.33-1.7L0.06 1.75l1.7-0.2z" fill="#f8cc0c"/><path transform="translate(18.51,0)" d="M2.5 0l0.74 1.55 1.7 0.2-1.25 1.17 0.33 1.7-1.52-0.84-1.52 0.84 0.33-1.7L0.06 1.75l1.7-0.2z" fill="#f8cc0c"/><path transform="translate(24.68,0)" d="M2.5 0.55l0.6 1.3 1.42 0.17-1.05 0.98 0.28 1.42-1.25-0.7-1.25 0.7 0.28-1.42-1.05-0.98 1.42-0.17z" fill="none" stroke="#f8cc0c" stroke-width="0.65"/></svg>
<svg style="left:414.1px;top:417.36px" width="3.4" height="4.8" viewBox="0 0 3.4 4.8"><rect x="0.85" y="0" width="1.7" height="3.0" rx="0.85" fill="#2e2e2e"/><path d="M0.35 2.0v0.6a1.35 1.35 0 0 0 2.7 0V2.0" stroke="#2e2e2e" stroke-width="0.55" fill="none"/><rect x="1.45" y="3.9" width="0.5" height="0.9" fill="#2e2e2e"/></svg>
<div class="t n" style="left:418.80px;top:417.17px;font-size:5.0px;color:#3a3a3a;font-weight:normal;">Interview</div>
<div class="t" style="left:486.7px;top:416.26px;width:15.5px;height:7px;border-radius:0.9px;background:#5590dc;color:#fff;font-size:3.1px;line-height:8.8px;text-align:center">ACTIVE</div>
<div class="t n" style="left:544.70px;top:417.17px;font-size:5.0px;color:#3a8fd8;font-weight:normal;">Edit</div>
<div class="t n" style="left:560.90px;top:417.17px;font-size:5.0px;color:#e14c5c;font-weight:normal;transform:scaleX(1.05);transform-origin:0 0;">Delete</div>
<div class="b" style="left:42.3px;top:429.63px;width:8.7px;height:8.7px;border-radius:50%;overflow:hidden"><svg style="left:0;top:0" width="8.7" height="8.7" viewBox="0 0 10 10"><rect width="10" height="10" fill="#f2f2f2"/><path d="M0.8 10.5C0.8 7.6 2.8 6.9 5 6.9S9.2 7.6 9.2 10.5Z" fill="#2a2a2a"/><ellipse cx="5" cy="3.9" rx="2.6" ry="2.8" fill="#140c06"/><ellipse cx="5" cy="4.8" rx="2.1" ry="2.5" fill="#3a2418"/></svg></div>
<div class="t" style="left:54.00px;top:431.52px;font-size:5.2px;color:#3170b8;font-weight:bold;transform:scaleX(0.965);transform-origin:0 0;">Earl Love</div>
<div class="t n" style="left:154.20px;top:431.69px;font-size:5.0px;color:#505050;font-weight:normal;">Senior Ruby Developer</div>
<div class="t n" style="left:283.00px;top:431.69px;font-size:5.0px;color:#505050;font-weight:normal;">Canada</div>
<svg style="left:336.5px;top:431.28px" width="30" height="5" viewBox="0 0 30 5"><path transform="translate(0.00,0)" d="M2.5 0l0.74 1.55 1.7 0.2-1.25 1.17 0.33 1.7-1.52-0.84-1.52 0.84 0.33-1.7L0.06 1.75l1.7-0.2z" fill="#f8cc0c"/><path transform="translate(6.17,0)" d="M2.5 0l0.74 1.55 1.7 0.2-1.25 1.17 0.33 1.7-1.52-0.84-1.52 0.84 0.33-1.7L0.06 1.75l1.7-0.2z" fill="#f8cc0c"/><path transform="translate(12.34,0)" d="M2.5 0l0.74 1.55 1.7 0.2-1.25 1.17 0.33 1.7-1.52-0.84-1.52 0.84 0.33-1.7L0.06 1.75l1.7-0.2z" fill="#f8cc0c"/><path transform="translate(18.51,0)" d="M2.5 0l0.74 1.55 1.7 0.2-1.25 1.17 0.33 1.7-1.52-0.84-1.52 0.84 0.33-1.7L0.06 1.75l1.7-0.2z" fill="#f8cc0c"/><path transform="translate(24.68,0)" d="M2.5 0.55l0.6 1.3 1.42 0.17-1.05 0.98 0.28 1.42-1.25-0.7-1.25 0.7 0.28-1.42-1.05-0.98 1.42-0.17z" fill="none" stroke="#f8cc0c" stroke-width="0.65"/></svg>
<svg style="left:413.5px;top:432.33px" width="4.7" height="4.1" viewBox="0 0 4.7 4.1"><circle cx="1.9" cy="1.8" r="1.35" stroke="#2e2e2e" stroke-width="0.9" fill="none"/><path d="M2.9 2.8l1.4 1.1" stroke="#2e2e2e" stroke-width="1.0"/></svg>
<div class="t n" style="left:420.70px;top:431.69px;font-size:5.0px;color:#3a3a3a;font-weight:normal;">Short List</div>
<div class="t" style="left:486.7px;top:430.78px;width:14px;height:7px;border-radius:0.9px;background:#35bfcf;color:#fff;font-size:3.1px;line-height:8.8px;text-align:center">HIRED</div>
<div class="t n" style="left:544.70px;top:431.69px;font-size:5.0px;color:#3a8fd8;font-weight:normal;">Edit</div>
<div class="t n" style="left:560.90px;top:431.69px;font-size:5.0px;color:#e14c5c;font-weight:normal;transform:scaleX(1.05);transform-origin:0 0;">Delete</div>
<div class="b" style="left:42.3px;top:444.15px;width:8.7px;height:8.7px;border-radius:50%;overflow:hidden"><svg style="left:0;top:0" width="8.7" height="8.7" viewBox="0 0 10 10"><rect width="10" height="10" fill="#8a5a48"/><path d="M0.8 10.5C0.8 7.6 2.8 6.9 5 6.9S9.2 7.6 9.2 10.5Z" fill="#a08070"/><ellipse cx="5" cy="3.9" rx="2.6" ry="2.8" fill="#6a4838"/><ellipse cx="5" cy="4.8" rx="2.1" ry="2.5" fill="#dcbcac"/></svg></div>
<div class="t" style="left:54.00px;top:446.04px;font-size:5.2px;color:#3170b8;font-weight:bold;transform:scaleX(0.965);transform-origin:0 0;">Isaac Gomez</div>
<div class="t n" style="left:154.20px;top:446.21px;font-size:5.0px;color:#505050;font-weight:normal;">Ruby On Rails Developer</div>
<div class="t n" style="left:283.00px;top:446.21px;font-size:5.0px;color:#505050;font-weight:normal;">France</div>
<svg style="left:336.5px;top:445.80px" width="30" height="5" viewBox="0 0 30 5"><path transform="translate(0.00,0)" d="M2.5 0l0.74 1.55 1.7 0.2-1.25 1.17 0.33 1.7-1.52-0.84-1.52 0.84 0.33-1.7L0.06 1.75l1.7-0.2z" fill="#f8cc0c"/><path transform="translate(6.17,0)" d="M2.5 0l0.74 1.55 1.7 0.2-1.25 1.17 0.33 1.7-1.52-0.84-1.52 0.84 0.33-1.7L0.06 1.75l1.7-0.2z" fill="#f8cc0c"/><path transform="translate(12.34,0)" d="M2.5 0l0.74 1.55 1.7 0.2-1.25 1.17 0.33 1.7-1.52-0.84-1.52 0.84 0.33-1.7L0.06 1.75l1.7-0.2z" fill="#f8cc0c"/><path transform="translate(18.51,0)" d="M2.5 0.55l0.6 1.3 1.42 0.17-1.05 0.98 0.28 1.42-1.25-0.7-1.25 0.7 0.28-1.42-1.05-0.98 1.42-0.17z" fill="none" stroke="#f8cc0c" stroke-width="0.65"/><path transform="translate(24.68,0)" d="M2.5 0.55l0.6 1.3 1.42 0.17-1.05 0.98 0.28 1.42-1.25-0.7-1.25 0.7 0.28-1.42-1.05-0.98 1.42-0.17z" fill="none" stroke="#f8cc0c" stroke-width="0.65"/></svg>
<svg style="left:414.1px;top:446.40px" width="3.4" height="4.8" viewBox="0 0 3.4 4.8"><rect x="0.85" y="0" width="1.7" height="3.0" rx="0.85" fill="#2e2e2e"/><path d="M0.35 2.0v0.6a1.35 1.35 0 0 0 2.7 0V2.0" stroke="#2e2e2e" stroke-width="0.55" fill="none"/><rect x="1.45" y="3.9" width="0.5" height="0.9" fill="#2e2e2e"/></svg>
<div class="t n" style="left:418.80px;top:446.21px;font-size:5.0px;color:#3a3a3a;font-weight:normal;">Interview</div>
<div class="t" style="left:486.7px;top:445.30px;width:15.5px;height:7px;border-radius:0.9px;background:#5590dc;color:#fff;font-size:3.1px;line-height:8.8px;text-align:center">ACTIVE</div>
<div class="t n" style="left:544.70px;top:446.21px;font-size:5.0px;color:#3a8fd8;font-weight:normal;">Edit</div>
<div class="t n" style="left:560.90px;top:446.21px;font-size:5.0px;color:#e14c5c;font-weight:normal;transform:scaleX(1.05);transform-origin:0 0;">Delete</div>
<div class="b" style="left:42.3px;top:458.67px;width:8.7px;height:8.7px;border-radius:50%;overflow:hidden"><svg style="left:0;top:0" width="8.7" height="8.7" viewBox="0 0 10 10"><rect width="10" height="10" fill="#2a4060"/><path d="M0.8 10.5C0.8 7.6 2.8 6.9 5 6.9S9.2 7.6 9.2 10.5Z" fill="#34486a"/><ellipse cx="5" cy="3.9" rx="2.6" ry="2.8" fill="#1a2030"/><ellipse cx="5" cy="4.8" rx="2.1" ry="2.5" fill="#e0c0a8"/></svg></div>
<div class="t" style="left:54.00px;top:460.56px;font-size:5.2px;color:#3170b8;font-weight:bold;transform:scaleX(0.965);transform-origin:0 0;">Roberto Doyle</div>
<div class="t n" style="left:154.20px;top:460.73px;font-size:5.0px;color:#505050;font-weight:normal;">Software Engineer</div>
<div class="t n" style="left:283.00px;top:460.73px;font-size:5.0px;color:#505050;font-weight:normal;">China</div>
<svg style="left:336.5px;top:460.32px" width="30" height="5" viewBox="0 0 30 5"><path transform="translate(0.00,0)" d="M2.5 0l0.74 1.55 1.7 0.2-1.25 1.17 0.33 1.7-1.52-0.84-1.52 0.84 0.33-1.7L0.06 1.75l1.7-0.2z" fill="#f8cc0c"/><path transform="translate(6.17,0)" d="M2.5 0l0.74 1.55 1.7 0.2-1.25 1.17 0.33 1.7-1.52-0.84-1.52 0.84 0.33-1.7L0.06 1.75l1.7-0.2z" fill="#f8cc0c"/><path transform="translate(12.34,0)" d="M2.5 0l0.74 1.55 1.7 0.2-1.25 1.17 0.33 1.7-1.52-0.84-1.52 0.84 0.33-1.7L0.06 1.75l1.7-0.2z" fill="#f8cc0c"/><path transform="translate(18.51,0)" d="M2.5 0l0.74 1.55 1.7 0.2-1.25 1.17 0.33 1.7-1.52-0.84-1.52 0.84 0.33-1.7L0.06 1.75l1.7-0.2z" fill="#f8cc0c"/><path transform="translate(24.68,0)" d="M2.5 0l0.74 1.55 1.7 0.2-1.25 1.17 0.33 1.7-1.52-0.84-1.52 0.84 0.33-1.7L0.06 1.75l1.7-0.2z" fill="#f8cc0c"/></svg>
<svg style="left:413.9px;top:461.82px" width="4.2" height="3.2" viewBox="0 0 4.2 3.2"><path d="M0.35 1.5L1.5 2.7L3.9 0.35" stroke="#2e2e2e" stroke-width="1.1" fill="none"/></svg>
<div class="t n" style="left:421.00px;top:460.73px;font-size:5.0px;color:#3a3a3a;font-weight:normal;">Hired</div>
<div class="t" style="left:486.7px;top:459.82px;width:14px;height:7px;border-radius:0.9px;background:#35bfcf;color:#fff;font-size:3.1px;line-height:8.8px;text-align:center">HIRED</div>
<div class="t n" style="left:544.70px;top:460.73px;font-size:5.0px;color:#3a8fd8;font-weight:normal;">Edit</div>
<div class="t n" style="left:560.90px;top:460.73px;font-size:5.0px;color:#e14c5c;font-weight:normal;transform:scaleX(1.05);transform-origin:0 0;">Delete</div>
</div></body></html>
